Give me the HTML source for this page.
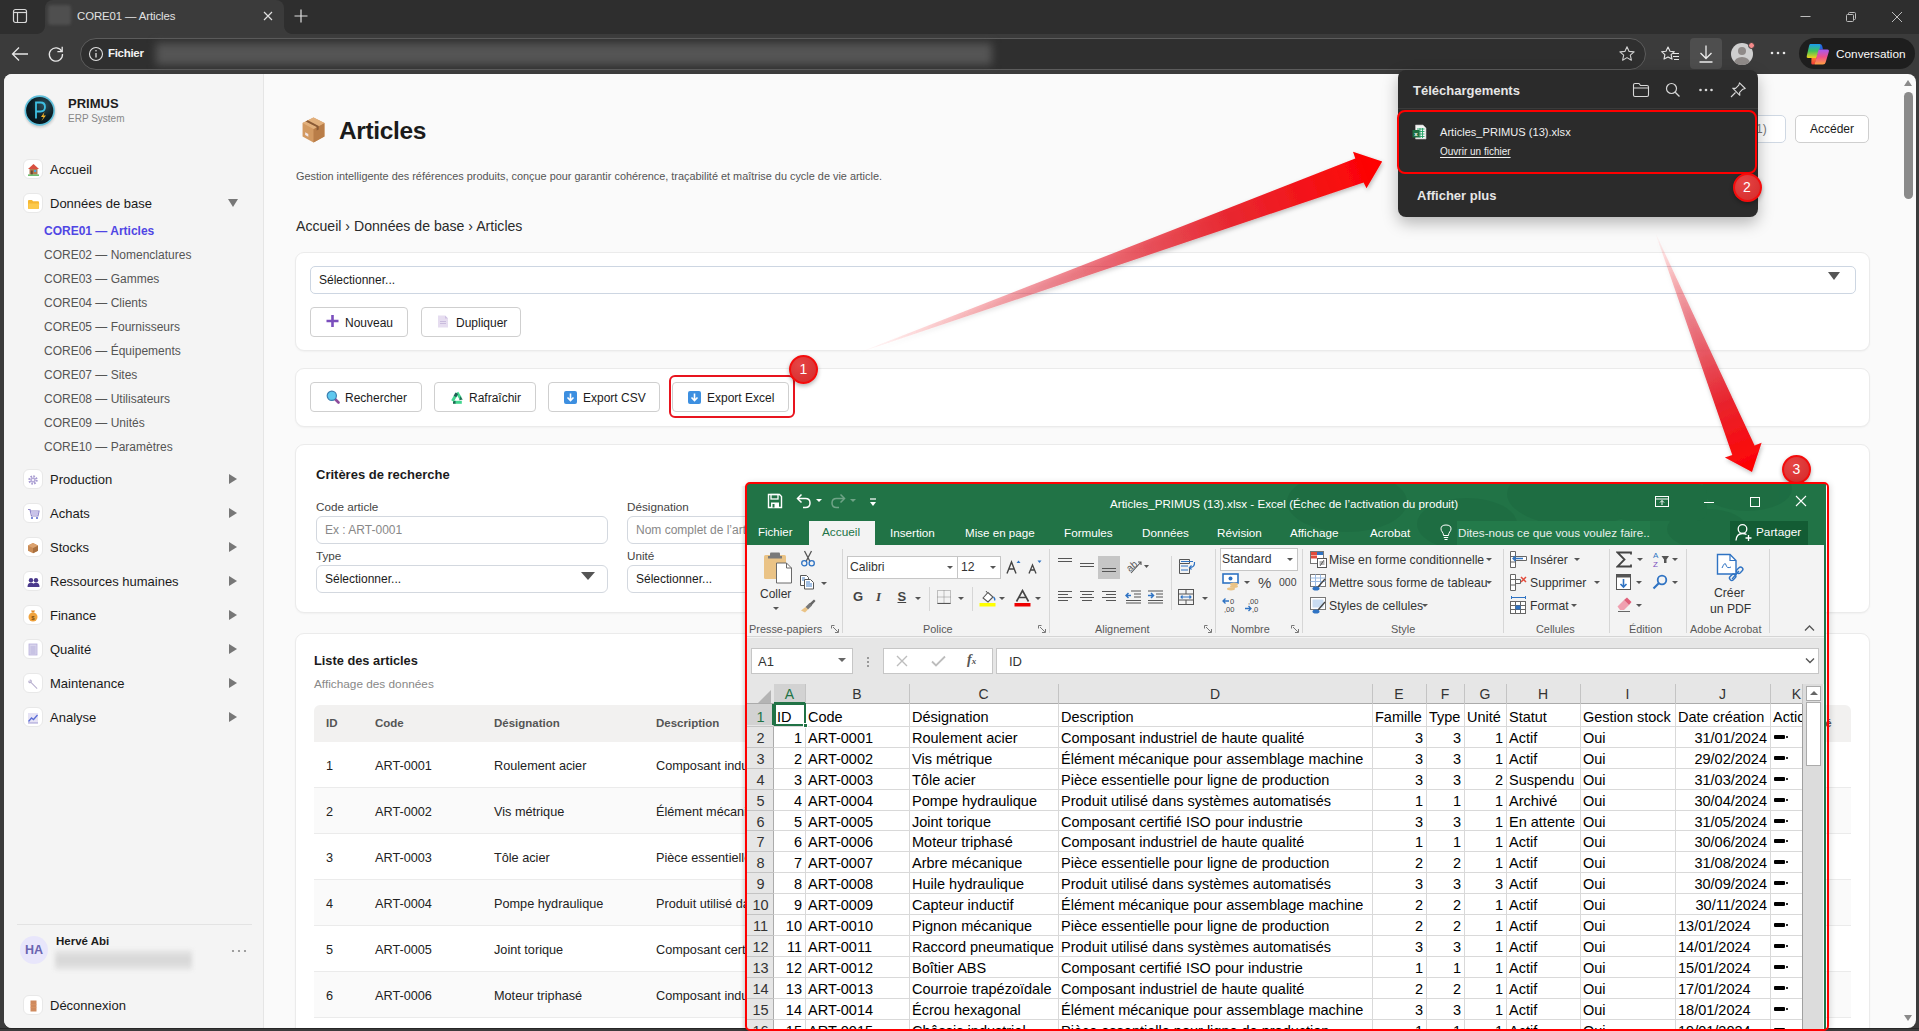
<!DOCTYPE html>
<html><head><meta charset="utf-8">
<style>
*{box-sizing:border-box;margin:0;padding:0}
html,body{width:1919px;height:1031px;overflow:hidden;background:#3b3b3b;font-family:"Liberation Sans",sans-serif}
.a{position:absolute}
.t{position:absolute;white-space:nowrap;line-height:1}
/* chrome */
#tabstrip{left:0;top:0;width:1919px;height:34px;background:#2e2e2e}
#tab{left:45px;top:0;width:239px;height:34px;background:#3b3b3b;border-radius:8px 8px 0 0}
#toolbar{left:0;top:34px;width:1919px;height:40px;background:#3b3b3b}
#page{left:4px;top:74px;width:1912px;height:953px;background:#fafafa;border-radius:8px;overflow:hidden}
#sidebar{left:0;top:0;width:259px;height:953px;background:#f4f4f4;border-right:1px solid #e6e6e6}
.nicon{position:absolute;width:20px;height:20px;background:#fff;border:1px solid #e8e8e8;border-radius:6px;font-size:11px;text-align:center;line-height:19px}
.nav{font-size:13px;color:#1a1a1a}
.sub{font-size:12px;color:#555}
.arr{color:#777;font-size:11px}
</style></head><body>

<div id="tabstrip" class="a"></div><div class="a" style="left:0;top:1028px;width:1919px;height:1px;background:#262626"></div>
<div id="tab" class="a"></div><div class="a" style="left:37px;top:26px;width:8px;height:8px;background:radial-gradient(circle at 0 0,#2e2e2e 7.5px,#3b3b3b 8.3px)"></div><div class="a" style="left:284px;top:26px;width:8px;height:8px;background:radial-gradient(circle at 100% 0,#2e2e2e 7.5px,#3b3b3b 8.3px)"></div>
<div id="toolbar" class="a"></div>
<!-- tab strip icons -->
<svg class="a" style="left:12px;top:8px" width="16" height="16" viewBox="0 0 16 16"><rect x="1.5" y="1.5" width="13" height="13" rx="2" fill="none" stroke="#d8d8d8" stroke-width="1.2"/><line x1="1.5" y1="4.5" x2="14.5" y2="4.5" stroke="#d8d8d8" stroke-width="1.2"/><line x1="5.5" y1="4.5" x2="5.5" y2="14.5" stroke="#d8d8d8" stroke-width="1.2"/></svg>
<div class="a" style="left:48px;top:5px;width:23px;height:20px;background:#4f4f4f;border-radius:3px;filter:blur(1.5px)"></div>
<div class="t" style="left:77px;top:11px;font-size:11.4px;color:#e2e2e2;letter-spacing:-0.1px">CORE01 — Articles</div>
<svg class="a" style="left:262px;top:10px" width="12" height="12" viewBox="0 0 12 12"><path d="M2 2L10 10M10 2L2 10" stroke="#e0e0e0" stroke-width="1.2"/></svg>
<svg class="a" style="left:293px;top:8px" width="16" height="16" viewBox="0 0 16 16"><path d="M8 1.5V14.5M1.5 8H14.5" stroke="#e0e0e0" stroke-width="1.2"/></svg>
<svg class="a" style="left:1798px;top:11px" width="16" height="12" viewBox="0 0 16 12"><path d="M2.5 5.5H12.5" stroke="#bdbdbd" stroke-width="1"/></svg>
<svg class="a" style="left:1845px;top:11px" width="12" height="12" viewBox="0 0 12 12"><rect x="1.5" y="3.5" width="7" height="7" rx="1" fill="none" stroke="#bdbdbd"/><path d="M3.5 3.5V2.5Q3.5 1.5 4.5 1.5H9.5Q10.5 1.5 10.5 2.5V7.5Q10.5 8.5 9.5 8.5H8.5" fill="none" stroke="#bdbdbd"/></svg>
<svg class="a" style="left:1891px;top:11px" width="12" height="12" viewBox="0 0 12 12"><path d="M1 1L11 11M11 1L1 11" stroke="#bdbdbd" stroke-width="1"/></svg>
<!-- toolbar -->
<svg class="a" style="left:11px;top:46px" width="18" height="16" viewBox="0 0 18 16"><path d="M17 8H1.5M8 1.5L1.5 8L8 14.5" fill="none" stroke="#e6e6e6" stroke-width="1.3"/></svg>
<svg class="a" style="left:47px;top:45px" width="18" height="18" viewBox="0 0 18 18"><path d="M14.8 6.5A6.6 6.6 0 1 0 15.5 9" fill="none" stroke="#e6e6e6" stroke-width="1.3"/><path d="M15.2 1.8V6.6H10.4" fill="none" stroke="#e6e6e6" stroke-width="1.3"/></svg>
<div class="a" style="left:80px;top:38px;width:1566px;height:32px;border:1px solid #5c5c5c;border-radius:16px;background:#2f2f2f"></div>
<div class="a" style="left:156px;top:43px;width:836px;height:22px;background:#555;filter:blur(4px)"></div>
<svg class="a" style="left:88px;top:46px" width="16" height="16" viewBox="0 0 16 16"><circle cx="8" cy="8" r="6.5" fill="none" stroke="#e0e0e0" stroke-width="1.1"/><path d="M8 7V11.5" stroke="#e0e0e0" stroke-width="1.3"/><circle cx="8" cy="4.8" r=".8" fill="#e0e0e0"/></svg>
<div class="t" style="left:108px;top:48px;font-size:11.5px;font-weight:bold;color:#f2f2f2;letter-spacing:-0.3px">Fichier</div>
<svg class="a" style="left:1618px;top:45px" width="18" height="18" viewBox="0 0 18 18"><path d="M9 1.8L11.1 6.4L16.1 6.9L12.3 10.2L13.4 15.2L9 12.6L4.6 15.2L5.7 10.2L1.9 6.9L6.9 6.4Z" fill="none" stroke="#cfcfcf" stroke-width="1.1" stroke-linejoin="round"/></svg>
<svg class="a" style="left:1660px;top:45px" width="20" height="18" viewBox="0 0 20 18"><path d="M8 2L10 6.2L14.4 6.7L11.1 9.7L12 14.1L8 11.9L4 14.1L4.9 9.7L1.6 6.7L6 6.2Z" fill="none" stroke="#e6e6e6" stroke-width="1.1" stroke-linejoin="round"/><path d="M13 8.5H19M13 11.5H19M14 14.5H19" stroke="#e6e6e6" stroke-width="1.1"/></svg>
<div class="a" style="left:1690px;top:38px;width:32px;height:31px;background:#4e4e4e;border-radius:4px"></div>
<svg class="a" style="left:1697px;top:44px" width="18" height="20" viewBox="0 0 18 20"><path d="M9 1.5V14.5M3.5 9L9 14.5L14.5 9M2.5 18H15.5" fill="none" stroke="#ededed" stroke-width="1.3"/></svg>
<div class="a" style="left:1731px;top:43px;width:22px;height:22px;border-radius:50%;background:#cfcfcf;overflow:hidden"><div class="a" style="left:7px;top:4px;width:8px;height:8px;border-radius:50%;background:#8f8a88"></div><div class="a" style="left:3px;top:14px;width:16px;height:12px;border-radius:50%;background:#8f8a88"></div></div>
<div class="a" style="left:1748px;top:42px;width:7px;height:7px;border-radius:50%;background:#f48a8a;border:1px solid #3b3b3b"></div>
<svg class="a" style="left:1770px;top:50px" width="16" height="6" viewBox="0 0 16 6"><circle cx="2" cy="3" r="1.3" fill="#e6e6e6"/><circle cx="8" cy="3" r="1.3" fill="#e6e6e6"/><circle cx="14" cy="3" r="1.3" fill="#e6e6e6"/></svg>
<div class="a" style="left:1799px;top:38px;width:116px;height:31px;background:#1e1e1e;border-radius:16px"></div>
<svg class="a" style="left:1806px;top:43px" width="24" height="22" viewBox="0 0 24 22"><defs><linearGradient id="cpa" x1="0" y1="0" x2="0" y2="1"><stop offset="0" stop-color="#1a9cf0"/><stop offset=".5" stop-color="#3fc25a"/><stop offset="1" stop-color="#f2d21a"/></linearGradient><linearGradient id="cpb" x1="0" y1="0" x2="0" y2="1"><stop offset="0" stop-color="#a55af5"/><stop offset=".5" stop-color="#f0508a"/><stop offset="1" stop-color="#ffa040"/></linearGradient><linearGradient id="cpc" x1="0" y1="0" x2="0" y2="1"><stop offset="0" stop-color="#ff7a30"/><stop offset="1" stop-color="#f03a3a"/></linearGradient></defs><path d="M11.5 1H13.8Q15.6 1 16.2 3L17 6.5H12.5Z" fill="#2565e0"/><path d="M5.5 15H10.5L9.3 20Q8.9 21.5 7.5 21.5H6.8Q5.2 21.5 5.3 20Z" fill="url(#cpc)"/><path d="M4.3 1H13Q15 1 14.4 3L10.6 15H1.9Q0.3 15 0.7 13.2L3.1 2.8Q3.5 1 4.3 1Z" fill="url(#cpa)"/><path d="M13 6.5H21.5Q23.4 6.5 22.9 8.5L19.6 19.5Q19.1 21.5 17 21.5H8.5L12.2 8Q12.5 6.5 13 6.5Z" fill="url(#cpb)"/></svg>
<div class="t" style="left:1836px;top:48.7px;font-size:11.8px;color:#fafafa">Conversation</div>
<div id="pg" class="a" style="left:4px;top:74px;width:1912px;height:954px;border-radius:8px;overflow:hidden;background:#fafafa"><div class="a" style="left:-4px;top:-74px;width:1919px;height:1031px">
<div class="a" style="left:4px;top:74px;width:260px;height:954px;background:#f4f4f4;border-right:1px solid #e5e5e5"></div>
<svg class="a" style="left:22px;top:92px" width="36" height="38" viewBox="0 0 36 38"><defs><radialGradient id="lg" cx=".65" cy=".3" r=".8"><stop offset="0" stop-color="#2d4f5a"/><stop offset=".55" stop-color="#0b1e25"/><stop offset="1" stop-color="#06141a"/></radialGradient></defs><circle cx="18" cy="20" r="15.5" fill="#000" opacity=".15" filter="blur(1px)"/><circle cx="17.7" cy="18.5" r="15.2" fill="#5fc0dc"/><circle cx="17.7" cy="18.5" r="13.6" fill="url(#lg)"/><path d="M14 26.5V10.5H18.5Q23 10.5 23 15Q23 19.5 18.5 19.5H14" fill="none" stroke="#3ec0e3" stroke-width="1.8"/><path d="M22.5 20L19 25H21.5L19.5 29L24 23.5H21.5Z" fill="#f2b32a"/></svg>
<div class="t" style="left:68px;top:97px;font-size:13px;font-weight:bold;color:#1d1d1d">PRIMUS</div>
<div class="t" style="left:68px;top:114px;font-size:10px;color:#888">ERP System</div>
<div class="nicon" style="left:23px;top:159px"><svg width="13" height="13" viewBox="0 0 13 13" style="margin-top:3px"><path d="M6.5 1L12 6H1Z" fill="#d9503f"/><rect x="2.5" y="6" width="8" height="5.5" fill="#b07a52"/><rect x="7" y="7" width="2.2" height="2" fill="#4aa8e0"/><rect x="3.8" y="7.5" width="2" height="4" fill="#6d4a33"/><rect x="1" y="11.5" width="11" height="1.3" fill="#4caf50"/></svg></div><div class="t nav" style="left:50px;top:163px">Accueil</div><div class="nicon" style="left:23px;top:193px"><svg width="13" height="12" viewBox="0 0 13 12" style="margin-top:4px"><path d="M1 3Q1 2 2 2H5L6 3.2H11Q12 3.2 12 4.2V10Q12 11 11 11H2Q1 11 1 10Z" fill="#f5b731"/><path d="M1.5 5.5H12.3L11.6 10.2Q11.5 11 10.7 11H2.2Q1.4 11 1.3 10.2Z" fill="#fcc94a"/></svg></div><div class="t nav" style="left:50px;top:197px">Données de base</div><div class="a" style="left:228px;top:199px;width:0;height:0;border-left:5px solid transparent;border-right:5px solid transparent;border-top:8px solid #777"></div><div class="t" style="left:44px;top:225px;font-size:12px;font-weight:bold;color:#5046e4">CORE01 — Articles</div><div class="t sub" style="left:44px;top:249px">CORE02 — Nomenclatures</div><div class="t sub" style="left:44px;top:273px">CORE03 — Gammes</div><div class="t sub" style="left:44px;top:297px">CORE04 — Clients</div><div class="t sub" style="left:44px;top:321px">CORE05 — Fournisseurs</div><div class="t sub" style="left:44px;top:345px">CORE06 — Équipements</div><div class="t sub" style="left:44px;top:369px">CORE07 — Sites</div><div class="t sub" style="left:44px;top:393px">CORE08 — Utilisateurs</div><div class="t sub" style="left:44px;top:417px">CORE09 — Unités</div><div class="t sub" style="left:44px;top:441px">CORE10 — Paramètres</div><div class="nicon" style="left:23px;top:469px"><svg width="12" height="12" viewBox="0 0 12 12" style="margin-top:4px"><circle cx="6" cy="6" r="3.6" fill="none" stroke="#a79bd0" stroke-width="2.2" stroke-dasharray="1.6 1.2"/><circle cx="6" cy="6" r="2.6" fill="#b6abd9"/><circle cx="6" cy="6" r="1.1" fill="#fff"/></svg></div><div class="t nav" style="left:50px;top:473px">Production</div><div class="a" style="left:229px;top:474px;width:0;height:0;border-top:5px solid transparent;border-bottom:5px solid transparent;border-left:8px solid #777"></div><div class="nicon" style="left:23px;top:503px"><svg width="13" height="12" viewBox="0 0 13 12" style="margin-top:4px"><path d="M1 1.5H3L4.5 8H11L12 3H3.6" fill="none" stroke="#8f86c8" stroke-width="1.2"/><path d="M4 3.5H11.5L10.8 7H4.6Z" fill="#c9c3ea"/><circle cx="5" cy="10" r="1" fill="#5566cc"/><circle cx="10" cy="10" r="1" fill="#5566cc"/></svg></div><div class="t nav" style="left:50px;top:507px">Achats</div><div class="a" style="left:229px;top:508px;width:0;height:0;border-top:5px solid transparent;border-bottom:5px solid transparent;border-left:8px solid #777"></div><div class="nicon" style="left:23px;top:537px"><svg width="12" height="12" viewBox="0 0 12 12" style="margin-top:4px"><path d="M6 1L11 3.5V8.8L6 11.2L1 8.8V3.5Z" fill="#c98b55"/><path d="M6 6V11.2L11 8.8V3.5Z" fill="#a9703f"/><path d="M1 3.5L6 6L11 3.5L6 1Z" fill="#dca26e"/></svg></div><div class="t nav" style="left:50px;top:541px">Stocks</div><div class="a" style="left:229px;top:542px;width:0;height:0;border-top:5px solid transparent;border-bottom:5px solid transparent;border-left:8px solid #777"></div><div class="nicon" style="left:23px;top:571px"><svg width="13" height="11" viewBox="0 0 13 11" style="margin-top:5px"><circle cx="4" cy="3.2" r="2.2" fill="#4b3a8c"/><circle cx="9" cy="3.2" r="2.2" fill="#4b3a8c"/><path d="M0.5 10Q0.5 5.8 4 5.8Q7.5 5.8 7.5 10Z" fill="#4b3a8c"/><path d="M5.5 10Q5.5 5.8 9 5.8Q12.5 5.8 12.5 10Z" fill="#4b3a8c"/></svg></div><div class="t nav" style="left:50px;top:575px">Ressources humaines</div><div class="a" style="left:229px;top:576px;width:0;height:0;border-top:5px solid transparent;border-bottom:5px solid transparent;border-left:8px solid #777"></div><div class="nicon" style="left:23px;top:605px"><svg width="12" height="13" viewBox="0 0 12 13" style="margin-top:3px"><path d="M4 1.5H8L7 3.5H5Z" fill="#e08a2a"/><circle cx="6" cy="8" r="4.5" fill="#f0a23c"/><text x="6" y="10.5" font-size="6" text-anchor="middle" fill="#7a4a10" font-family="Liberation Sans" font-weight="bold">$</text></svg></div><div class="t nav" style="left:50px;top:609px">Finance</div><div class="a" style="left:229px;top:610px;width:0;height:0;border-top:5px solid transparent;border-bottom:5px solid transparent;border-left:8px solid #777"></div><div class="nicon" style="left:23px;top:639px"><svg width="10" height="13" viewBox="0 0 10 13" style="margin-top:3px"><rect x="1" y="1" width="8" height="11" fill="#d8d4ec" stroke="#b8b0dc" stroke-width=".8"/><path d="M2.5 4H7.5M2.5 6H7.5M2.5 8H7.5M2.5 10H7.5" stroke="#a59bd3" stroke-width=".6"/></svg></div><div class="t nav" style="left:50px;top:643px">Qualité</div><div class="a" style="left:229px;top:644px;width:0;height:0;border-top:5px solid transparent;border-bottom:5px solid transparent;border-left:8px solid #777"></div><div class="nicon" style="left:23px;top:673px"><svg width="12" height="12" viewBox="0 0 12 12" style="margin-top:4px"><path d="M2 2.2Q3.5 1 4.6 2.2Q5.2 3.2 4.6 4.2L10.5 10.2L9.8 10.9L3.8 5Q2.8 5.6 1.8 5Q0.8 4 1.6 2.6L3 3.8L3.8 3Z" fill="#b8b0cf"/></svg></div><div class="t nav" style="left:50px;top:677px">Maintenance</div><div class="a" style="left:229px;top:678px;width:0;height:0;border-top:5px solid transparent;border-bottom:5px solid transparent;border-left:8px solid #777"></div><div class="nicon" style="left:23px;top:707px"><svg width="12" height="12" viewBox="0 0 12 12" style="margin-top:4px"><rect x="1" y="1" width="10" height="10" fill="#e6e3f5"/><path d="M1.5 9.5L4.5 6L6.5 7.5L10.5 3" fill="none" stroke="#5b6ed6" stroke-width="1.3"/><path d="M1 11H11" stroke="#8d86c9" stroke-width=".8"/></svg></div><div class="t nav" style="left:50px;top:711px">Analyse</div><div class="a" style="left:229px;top:712px;width:0;height:0;border-top:5px solid transparent;border-bottom:5px solid transparent;border-left:8px solid #777"></div><div class="a" style="left:17px;top:924px;width:235px;height:1px;background:#e3e3e3"></div>
<div class="a" style="left:20px;top:936px;width:28px;height:28px;border-radius:50%;background:#e8e6fb"></div>
<div class="t" style="left:20px;top:943.5px;width:28px;text-align:center;font-size:12.5px;font-weight:bold;color:#6a64b0">HA</div>
<div class="t" style="left:56px;top:936px;font-size:11.5px;font-weight:bold;color:#1d1d1d">Hervé Abi</div>
<div class="a" style="left:55px;top:950px;width:137px;height:20px;background:linear-gradient(to bottom,#e6e6e6,#d6d6d6 50%,#e6e6e6);filter:blur(2px)"></div>
<svg class="a" style="left:231px;top:949px" width="16" height="4" viewBox="0 0 16 4"><circle cx="2" cy="2" r="1.1" fill="#8a8a8a"/><circle cx="8" cy="2" r="1.1" fill="#8a8a8a"/><circle cx="14" cy="2" r="1.1" fill="#8a8a8a"/></svg>
<div class="nicon" style="left:23px;top:995px"><svg width="9" height="12" viewBox="0 0 9 12" style="margin-top:4px"><rect x="1.5" y="0.5" width="6" height="11" fill="#cf8a5e"/><path d="M1.5 4.5H7.5M1.5 7.5H7.5" stroke="#e09a66" stroke-width=".5"/></svg></div><div class="t nav" style="left:50px;top:999px">Déconnexion</div>
<svg class="a" style="left:301px;top:116px" width="25" height="28" viewBox="0 0 24 26" preserveAspectRatio="none"><path d="M12 1.5L22.5 6.5V19L12 24.5L1.5 19V6.5Z" fill="#d39a62"/><path d="M12 12V24.5L22.5 19V6.5Z" fill="#b97d48"/><path d="M1.5 6.5L12 12L22.5 6.5L12 1.5Z" fill="#e2b07c"/><path d="M6.5 4L17 9.2V12.5L15 13.5V10.2L4.5 5Z" fill="#8a5a35"/><rect x="4" y="16" width="3" height="2.5" fill="#f2e6e6" transform="skewY(28) translate(0,-3)"/></svg>
<div class="t" style="left:339px;top:118.5px;font-size:24.5px;font-weight:bold;color:#1b1b1b;letter-spacing:-0.35px">Articles</div>
<div class="t" style="left:296px;top:170.5px;font-size:10.9px;color:#555">Gestion intelligente des références produits, conçue pour garantir cohérence, traçabilité et maîtrise du cycle de vie article.</div>
<div class="t" style="left:296px;top:219px;font-size:14.1px;color:#2a2a2a">Accueil › Données de base › Articles</div>
<div class="a" style="left:1600px;top:115px;width:186px;height:28px;background:#fff;border:1px solid #cfd8e3;border-radius:5px"></div>
<div class="t" style="left:1756px;top:123px;font-size:12px;color:#777">1)</div>
<div class="a" style="left:1795px;top:115px;width:74px;height:28px;background:#fff;border:1px solid #cfcfcf;border-radius:5px"></div>
<div class="t" style="left:1810px;top:123px;font-size:12px;color:#1b1b1b">Accéder</div>
<div class="a" style="left:295px;top:251.5px;width:1575px;height:99.5px;background:#fff;border:1px solid #ebebeb;border-radius:9px;box-shadow:0 1px 2px rgba(0,0,0,.04)"></div>
<div class="a" style="left:310px;top:266px;width:1546px;height:28px;background:#fff;border:1px solid #cdd6e2;border-radius:5px"></div>
<div class="t" style="left:319px;top:274px;font-size:12px;color:#1b1b1b">Sélectionner...</div>
<div class="a" style="left:1828px;top:272px;width:0;height:0;border-left:6.5px solid transparent;border-right:6.5px solid transparent;border-top:8px solid #555"></div>
<div class="a" style="left:310px;top:307px;width:98px;height:30px;background:#fff;border:1px solid #cfcfcf;border-radius:4px"></div><svg class="a" style="left:326px;top:314px" width="13" height="14" viewBox="0 0 13 14"><path d="M6.5 1V13M0.5 7H12.5" stroke="#7b4fbd" stroke-width="2.6"/></svg><div class="t" style="left:345px;top:317px;font-size:12px;color:#1b1b1b">Nouveau</div>
<div class="a" style="left:421px;top:307px;width:100px;height:30px;background:#fff;border:1px solid #cfcfcf;border-radius:4px"></div><svg class="a" style="left:437px;top:315px" width="12" height="13" viewBox="0 0 12 13"><path d="M1 0.5H8L11 3.5V12.5H1Z" fill="#e6ddf0"/><path d="M8 0.5V3.5H11Z" fill="#cfc2e2"/><path d="M3 6.5H9M3 8.5H9" stroke="#c2b4d8" stroke-width=".8"/></svg><div class="t" style="left:456px;top:317px;font-size:12px;color:#1b1b1b">Dupliquer</div>
<div class="a" style="left:295px;top:367.5px;width:1575px;height:59.5px;background:#fff;border:1px solid #ebebeb;border-radius:9px;box-shadow:0 1px 2px rgba(0,0,0,.04)"></div>
<div class="a" style="left:310px;top:382px;width:112px;height:30px;background:#fff;border:1px solid #cfcfcf;border-radius:4px"></div><svg class="a" style="left:326px;top:390px" width="14" height="14" viewBox="0 0 14 14"><path d="M8.5 8.5L12.5 12.5" stroke="#8e4b9b" stroke-width="2.6" stroke-linecap="round"/><circle cx="5.8" cy="5.8" r="4.6" fill="#5ec8ef" stroke="#3a7fb0" stroke-width="1.2"/></svg><div class="t" style="left:345px;top:392px;font-size:12px;color:#1b1b1b">Rechercher</div>
<div class="a" style="left:434px;top:382px;width:102px;height:30px;background:#fff;border:1px solid #cfcfcf;border-radius:4px"></div><svg class="a" style="left:450px;top:390px" width="15" height="15" viewBox="0 0 15 15"><path d="M7 2.5L10.5 8.2" stroke="#43d68f" stroke-width="3"/><path d="M10.2 6.2L12.8 9.6L9.2 10.2Z" fill="#1d7055"/><path d="M11.8 12.3H5" stroke="#43d68f" stroke-width="3"/><path d="M5.5 12.3H3" stroke="#1d6a52" stroke-width="3"/><path d="M2.5 11L5.5 5.8" stroke="#43d68f" stroke-width="3"/><path d="M5 6.5L6.8 3.2" stroke="#1f5f55" stroke-width="3"/></svg><div class="t" style="left:469px;top:392px;font-size:12px;color:#1b1b1b">Rafraîchir</div>
<div class="a" style="left:548px;top:382px;width:112px;height:30px;background:#fff;border:1px solid #cfcfcf;border-radius:4px"></div><svg class="a" style="left:564px;top:391px" width="13" height="13" viewBox="0 0 13 13"><rect x="0" y="0" width="13" height="13" rx="2" fill="#3d8fe0"/><path d="M6.5 2.5V9M3.5 6.5L6.5 9.5L9.5 6.5" fill="none" stroke="#fff" stroke-width="1.6"/></svg><div class="t" style="left:583px;top:392px;font-size:12px;color:#1b1b1b">Export CSV</div>
<div class="a" style="left:672px;top:382px;width:117px;height:30px;background:#fff;border:1px solid #cfcfcf;border-radius:4px"></div><svg class="a" style="left:688px;top:391px" width="13" height="13" viewBox="0 0 13 13"><rect x="0" y="0" width="13" height="13" rx="2" fill="#3d8fe0"/><path d="M6.5 2.5V9M3.5 6.5L6.5 9.5L9.5 6.5" fill="none" stroke="#fff" stroke-width="1.6"/></svg><div class="t" style="left:707px;top:392px;font-size:12px;color:#1b1b1b">Export Excel</div>
<div class="a" style="left:295px;top:443.5px;width:1575px;height:169.5px;background:#fff;border:1px solid #ebebeb;border-radius:9px;box-shadow:0 1px 2px rgba(0,0,0,.04)"></div>
<div class="t" style="left:316px;top:468px;font-size:13px;font-weight:bold;color:#1b1b1b">Critères de recherche</div>
<div class="t" style="left:316px;top:501px;font-size:11.7px;color:#444">Code article</div>
<div class="a" style="left:316px;top:516px;width:292px;height:28px;background:#fff;border:1px solid #d3d8df;border-radius:6px"></div><div class="t" style="left:325px;top:524px;font-size:12px;color:#888">Ex : ART-0001</div>
<div class="t" style="left:627px;top:501px;font-size:11.7px;color:#444">Désignation</div>
<div class="a" style="left:627px;top:516px;width:292px;height:28px;background:#fff;border:1px solid #d3d8df;border-radius:6px"></div><div class="t" style="left:636px;top:524px;font-size:12px;color:#888">Nom complet de l’article</div>
<div class="t" style="left:316px;top:550px;font-size:11.7px;color:#444">Type</div>
<div class="a" style="left:316px;top:565px;width:292px;height:28px;background:#fff;border:1px solid #d3d8df;border-radius:6px"></div><div class="t" style="left:325px;top:573px;font-size:12px;color:#1b1b1b">Sélectionner...</div><div class="a" style="left:581px;top:572px;width:0;height:0;border-left:7.0px solid transparent;border-right:7.0px solid transparent;border-top:8px solid #555"></div>
<div class="t" style="left:627px;top:550px;font-size:11.7px;color:#444">Unité</div>
<div class="a" style="left:627px;top:565px;width:292px;height:28px;background:#fff;border:1px solid #d3d8df;border-radius:6px"></div><div class="t" style="left:636px;top:573px;font-size:12px;color:#1b1b1b">Sélectionner...</div><div class="a" style="left:892px;top:572px;width:0;height:0;border-left:7.0px solid transparent;border-right:7.0px solid transparent;border-top:8px solid #555"></div>
<div class="a" style="left:295px;top:632.5px;width:1575px;height:420.5px;background:#fff;border:1px solid #ebebeb;border-radius:9px;box-shadow:0 1px 2px rgba(0,0,0,.04)"></div>
<div class="t" style="left:314px;top:655px;font-size:12.8px;font-weight:bold;color:#1b1b1b">Liste des articles</div>
<div class="t" style="left:314px;top:679px;font-size:11.8px;color:#888">Affichage des données</div>
<div class="a" style="left:314px;top:705px;width:1537px;height:37px;background:#f2f1f0;border-radius:6px 6px 0 0"></div>
<div class="t" style="left:326px;top:718px;font-size:11.5px;font-weight:bold;color:#555">ID</div>
<div class="t" style="left:375px;top:718px;font-size:11.5px;font-weight:bold;color:#555">Code</div>
<div class="t" style="left:494px;top:718px;font-size:11.5px;font-weight:bold;color:#555">Désignation</div>
<div class="t" style="left:656px;top:718px;font-size:11.5px;font-weight:bold;color:#555">Description</div>
<div class="t" style="left:1790px;top:718px;font-size:11.5px;font-weight:bold;color:#555">Activité</div>
<div class="a" style="left:314px;top:787px;width:1537px;height:1px;background:#ebebeb"></div>
<div class="t" style="left:326px;top:760px;font-size:12.7px;color:#222">1</div>
<div class="t" style="left:375px;top:760px;font-size:12.7px;color:#222">ART-0001</div>
<div class="t" style="left:494px;top:760px;font-size:12.7px;color:#222">Roulement acier</div>
<div class="t" style="left:656px;top:760px;font-size:12.7px;color:#222">Composant industriel de haute qualité</div>
<div class="a" style="left:314px;top:788px;width:1537px;height:46px;background:#fafafa"></div>
<div class="a" style="left:314px;top:833px;width:1537px;height:1px;background:#ebebeb"></div>
<div class="t" style="left:326px;top:806px;font-size:12.7px;color:#222">2</div>
<div class="t" style="left:375px;top:806px;font-size:12.7px;color:#222">ART-0002</div>
<div class="t" style="left:494px;top:806px;font-size:12.7px;color:#222">Vis métrique</div>
<div class="t" style="left:656px;top:806px;font-size:12.7px;color:#222">Élément mécanique pour assemblage machine</div>
<div class="a" style="left:314px;top:879px;width:1537px;height:1px;background:#ebebeb"></div>
<div class="t" style="left:326px;top:852px;font-size:12.7px;color:#222">3</div>
<div class="t" style="left:375px;top:852px;font-size:12.7px;color:#222">ART-0003</div>
<div class="t" style="left:494px;top:852px;font-size:12.7px;color:#222">Tôle acier</div>
<div class="t" style="left:656px;top:852px;font-size:12.7px;color:#222">Pièce essentielle pour ligne de production</div>
<div class="a" style="left:314px;top:880px;width:1537px;height:46px;background:#fafafa"></div>
<div class="a" style="left:314px;top:925px;width:1537px;height:1px;background:#ebebeb"></div>
<div class="t" style="left:326px;top:898px;font-size:12.7px;color:#222">4</div>
<div class="t" style="left:375px;top:898px;font-size:12.7px;color:#222">ART-0004</div>
<div class="t" style="left:494px;top:898px;font-size:12.7px;color:#222">Pompe hydraulique</div>
<div class="t" style="left:656px;top:898px;font-size:12.7px;color:#222">Produit utilisé dans systèmes automatisés</div>
<div class="a" style="left:314px;top:971px;width:1537px;height:1px;background:#ebebeb"></div>
<div class="t" style="left:326px;top:944px;font-size:12.7px;color:#222">5</div>
<div class="t" style="left:375px;top:944px;font-size:12.7px;color:#222">ART-0005</div>
<div class="t" style="left:494px;top:944px;font-size:12.7px;color:#222">Joint torique</div>
<div class="t" style="left:656px;top:944px;font-size:12.7px;color:#222">Composant certifié ISO pour industrie</div>
<div class="a" style="left:314px;top:972px;width:1537px;height:46px;background:#fafafa"></div>
<div class="a" style="left:314px;top:1017px;width:1537px;height:1px;background:#ebebeb"></div>
<div class="t" style="left:326px;top:990px;font-size:12.7px;color:#222">6</div>
<div class="t" style="left:375px;top:990px;font-size:12.7px;color:#222">ART-0006</div>
<div class="t" style="left:494px;top:990px;font-size:12.7px;color:#222">Moteur triphasé</div>
<div class="t" style="left:656px;top:990px;font-size:12.7px;color:#222">Composant industriel de haute qualité</div>
<div class="a" style="left:1904px;top:80px;width:0;height:0;border-left:4.5px solid transparent;border-right:4.5px solid transparent;border-bottom:6px solid #8a8a8a"></div>
<div class="a" style="left:1904px;top:92px;width:9px;height:107px;background:#8a8a8a;border-radius:5px"></div>
<div class="a" style="left:1904px;top:1015px;width:0;height:0;border-left:4.5px solid transparent;border-right:4.5px solid transparent;border-top:6px solid #8a8a8a"></div>
</div></div>
<div class="a" style="left:1398px;top:70px;width:360px;height:147px;background:#2b2b2b;border-radius:8px;box-shadow:0 6px 16px rgba(0,0,0,.28)"></div>
<div class="t" style="left:1413px;top:84px;font-size:13px;font-weight:bold;color:#e6e6e6">Téléchargements</div>
<svg class="a" style="left:1632px;top:82px" width="18" height="16" viewBox="0 0 18 16"><path d="M1.5 3Q1.5 1.5 3 1.5H7L8.5 3.5H15Q16.5 3.5 16.5 5V13Q16.5 14.5 15 14.5H3Q1.5 14.5 1.5 13Z M1.5 6H16.5" fill="none" stroke="#d8d8d8" stroke-width="1.1"/></svg>
<svg class="a" style="left:1665px;top:82px" width="16" height="16" viewBox="0 0 16 16"><circle cx="6.5" cy="6.5" r="5" fill="none" stroke="#d8d8d8" stroke-width="1.2"/><path d="M10.2 10.2L14.5 14.5" stroke="#d8d8d8" stroke-width="1.3"/></svg>
<svg class="a" style="left:1698px;top:87px" width="16" height="6" viewBox="0 0 16 6"><circle cx="2.5" cy="3" r="1.3" fill="#d8d8d8"/><circle cx="8" cy="3" r="1.3" fill="#d8d8d8"/><circle cx="13.5" cy="3" r="1.3" fill="#d8d8d8"/></svg>
<svg class="a" style="left:1729px;top:81px" width="18" height="18" viewBox="0 0 18 18"><path d="M10.5 1.8L16.2 7.5L13.8 8.2L10.6 11.4L10.8 14.3L3.7 7.2L6.6 7.4L9.8 4.2Z M6.5 11.5L2 16" fill="none" stroke="#d8d8d8" stroke-width="1.1" stroke-linejoin="round"/></svg>
<div class="a" style="left:1398px;top:108px;width:360px;height:1px;background:#3a3a3a"></div>
<div class="a" style="left:1397px;top:110px;width:360px;height:64px;border:2.5px solid #f00;border-radius:8px"></div>
<svg class="a" style="left:1412px;top:124px" width="15" height="16" viewBox="0 0 15 16"><path d="M3.5 1H11L14 4V15H3.5Z" fill="#f4f4f4" stroke="#bdbdbd" stroke-width=".6"/><path d="M5 5H12.5M5 7.5H12.5M5 10H12.5M5 12.5H12.5M8 4V14M10.5 4V14" stroke="#21a366" stroke-width=".9"/><rect x="0.5" y="6" width="7" height="7.5" fill="#1d6f42"/><text x="4" y="12.3" font-size="6" text-anchor="middle" fill="#fff" font-family="Liberation Sans" font-weight="bold">x</text></svg>
<div class="t" style="left:1440px;top:126.5px;font-size:11.1px;color:#f0f0f0">Articles_PRIMUS (13).xlsx</div>
<div class="t" style="left:1440px;top:147px;font-size:10px;color:#f0f0f0;text-decoration:underline;text-underline-offset:2px">Ouvrir un fichier</div>
<div class="t" style="left:1417px;top:188.5px;font-size:13px;font-weight:bold;color:#e6e6e6">Afficher plus</div>
<div class="a" style="left:669px;top:375px;width:126px;height:43px;border:2.6px solid #e8141e;border-radius:6px"></div>
<div class="a" style="left:789.0px;top:355.0px;width:29px;height:29px;border-radius:50%;background:radial-gradient(circle at 35% 30%,#e64545,#d42a2a);border:2px solid #f40c0c;box-shadow:0 2px 4px rgba(0,0,0,.3)"></div><div class="t" style="left:793.5px;top:362.0px;width:20px;text-align:center;font-size:14px;color:#fff">1</div>
<svg class="a" style="left:0;top:0;overflow:visible" width="1919" height="1031" viewBox="0 0 1919 1031"><defs><linearGradient id="ag1" gradientUnits="userSpaceOnUse" x1="858" y1="353" x2="1382" y2="161"><stop offset="0" stop-color="#ff3030" stop-opacity="0"/><stop offset=".35" stop-color="#e84050" stop-opacity=".55"/><stop offset=".7" stop-color="#e8202a" stop-opacity=".95"/><stop offset="1" stop-color="#ff0000"/></linearGradient><linearGradient id="ag2" gradientUnits="userSpaceOnUse" x1="1655" y1="232" x2="1752" y2="472"><stop offset="0" stop-color="#ff3030" stop-opacity="0"/><stop offset=".35" stop-color="#e84050" stop-opacity=".6"/><stop offset=".7" stop-color="#e8202a" stop-opacity=".97"/><stop offset="1" stop-color="#ff0000"/></linearGradient><filter id="sh" x="-20%" y="-20%" width="140%" height="140%"><feDropShadow dx="1" dy="2" stdDeviation="2" flood-color="#000" flood-opacity=".25"/></filter></defs><path d="M858 353L1355.3 158.6L1353 151.8L1382.2 161.5L1366.5 188.2L1363.6 182.4Z" fill="url(#ag1)" filter="url(#sh)"/><path d="M1655 232L1732.3 455L1724.9 457.6L1752 472L1761.6 442.8L1754.6 445.4Z" fill="url(#ag2)" filter="url(#sh)"/></svg>
<div class="a" style="left:1732.5px;top:173.0px;width:29px;height:29px;border-radius:50%;background:radial-gradient(circle at 35% 30%,#e64545,#d42a2a);border:2px solid #f40c0c;box-shadow:0 2px 4px rgba(0,0,0,.3)"></div><div class="t" style="left:1737px;top:180.0px;width:20px;text-align:center;font-size:14px;color:#fff">2</div>
<div class="a" style="left:1782.0px;top:454.5px;width:29px;height:29px;border-radius:50%;background:radial-gradient(circle at 35% 30%,#e64545,#d42a2a);border:2px solid #f40c0c;box-shadow:0 2px 4px rgba(0,0,0,.3)"></div><div class="t" style="left:1786.5px;top:461.5px;width:20px;text-align:center;font-size:14px;color:#fff">3</div>
<div class="a" style="left:741px;top:486px;width:6px;height:545px;background:linear-gradient(to right,rgba(0,0,0,0),rgba(0,0,0,.12))"></div>
<div class="a" style="left:0;top:0;width:1919px;height:1031px;clip-path:inset(484px 93px 2px 747px)"><div class="a" style="left:747px;top:484px;width:1079px;height:547px;background:#f3f3f3"></div>
<div class="a" style="left:747px;top:484px;width:1079px;height:61px;background:#217346"></div>
<svg class="a" style="left:747px;top:484px" width="1079" height="61" viewBox="0 0 1079 61"><g fill="#1d6b41" opacity=".7"><ellipse cx="600" cy="18" rx="60" ry="30"/><ellipse cx="720" cy="40" rx="50" ry="26"/><ellipse cx="830" cy="10" rx="70" ry="32"/><ellipse cx="960" cy="45" rx="40" ry="20"/><ellipse cx="1000" cy="5" rx="45" ry="22"/><rect x="870" y="0" width="90" height="37" rx="10"/></g></svg>
<svg class="a" style="left:767px;top:493px" width="16" height="16" viewBox="0 0 16 16"><path d="M1.5 1.5H12.5L14.5 3.5V14.5H1.5Z" fill="none" stroke="#fff" stroke-width="1.4"/><rect x="4" y="1.5" width="7" height="4.5" fill="none" stroke="#fff" stroke-width="1.3"/><rect x="4" y="9.5" width="8" height="5" fill="#fff"/><rect x="5.5" y="11" width="2" height="3.5" fill="#217346"/></svg>
<svg class="a" style="left:796px;top:493px" width="30" height="16" viewBox="0 0 30 16"><path d="M2 5.5H9.5Q14 5.5 14 10Q14 14.5 9.5 14.5H7" fill="none" stroke="#fff" stroke-width="1.5"/><path d="M5.5 1.5L1.5 5.5L5.5 9.5" fill="none" stroke="#fff" stroke-width="1.5"/><path d="M20 6H26L23 9Z" fill="#fff"/></svg>
<svg class="a" style="left:831px;top:493px" width="30" height="16" viewBox="0 0 30 16" opacity=".35"><path d="M13 5.5H5.5Q1 5.5 1 10Q1 14.5 5.5 14.5H8" fill="none" stroke="#fff" stroke-width="1.5"/><path d="M9.5 1.5L13.5 5.5L9.5 9.5" fill="none" stroke="#fff" stroke-width="1.5"/><path d="M19 6H25L22 9Z" fill="#fff"/></svg>
<svg class="a" style="left:869px;top:498px" width="8" height="9" viewBox="0 0 8 9"><path d="M1 1H7" stroke="#fff" stroke-width="1.2"/><path d="M1 4H7L4 8Z" fill="#fff"/></svg>
<div class="t" style="left:1110px;top:498px;font-size:11.65px;color:#fff">Articles_PRIMUS (13).xlsx - Excel (Échec de l’activation du produit)</div>
<svg class="a" style="left:1655px;top:496px" width="14" height="11" viewBox="0 0 14 11"><rect x=".5" y=".5" width="13" height="10" fill="none" stroke="#fff"/><path d="M.5 3H13.5" stroke="#fff"/><path d="M7 9V4.5M5 6.5L7 4.5L9 6.5" fill="none" stroke="#fff"/></svg>
<div class="a" style="left:1704px;top:502px;width:10px;height:1px;background:#fff"></div>
<div class="a" style="left:1750px;top:497px;width:10px;height:10px;border:1px solid #fff"></div>
<svg class="a" style="left:1795px;top:495px" width="12" height="12" viewBox="0 0 12 12"><path d="M1 1L11 11M11 1L1 11" stroke="#fff" stroke-width="1.1"/></svg>
<div class="a" style="left:809px;top:521px;width:66px;height:24px;background:#f3f3f3"></div>
<div class="t" style="left:758px;top:526.8px;font-size:11.5px;color:#fff">Fichier</div>
<div class="t" style="left:822px;top:526.8px;font-size:11.8px;color:#217346">Accueil</div>
<div class="t" style="left:890px;top:526.8px;font-size:11.7px;color:#fff">Insertion</div>
<div class="t" style="left:965px;top:526.8px;font-size:11.6px;color:#fff">Mise en page</div>
<div class="t" style="left:1064px;top:526.8px;font-size:11.7px;color:#fff">Formules</div>
<div class="t" style="left:1142px;top:526.8px;font-size:11.7px;color:#fff">Données</div>
<div class="t" style="left:1217px;top:526.8px;font-size:11.7px;color:#fff">Révision</div>
<div class="t" style="left:1290px;top:526.8px;font-size:11.7px;color:#fff">Affichage</div>
<div class="t" style="left:1370px;top:526.8px;font-size:11.7px;color:#fff">Acrobat</div>
<div class="a" style="left:1457px;top:521px;width:193px;height:24px;background:#237a4a"></div>
<svg class="a" style="left:1440px;top:524px" width="12" height="17" viewBox="0 0 12 17"><path d="M3.5 11.5Q3.5 9.5 2.3 8Q1 6.5 1 4.8Q1 1 6 1Q11 1 11 4.8Q11 6.5 9.7 8Q8.5 9.5 8.5 11.5Z M3.8 13.5H8.2M4.5 15.5H7.5" fill="none" stroke="#fff" stroke-width="1"/></svg>
<div class="t" style="left:1458px;top:526.8px;font-size:11.7px;color:#e8f0ea">Dites-nous ce que vous voulez faire..</div>
<div class="a" style="left:1730px;top:521px;width:78px;height:24px;background:#135c34"></div>
<svg class="a" style="left:1735px;top:523px" width="18" height="19" viewBox="0 0 18 19"><circle cx="7.5" cy="6" r="4.3" fill="none" stroke="#fff" stroke-width="1.3"/><path d="M1 17.5Q1.5 10.5 7.5 10.5Q10 10.5 11.5 11.5" fill="none" stroke="#fff" stroke-width="1.3"/><path d="M13.5 12V18M10.5 15H16.5" stroke="#fff" stroke-width="1.3"/></svg>
<div class="t" style="left:1756px;top:526.8px;font-size:11.8px;color:#fff">Partager</div>
<div class="a" style="left:747px;top:545px;width:1079px;height:92px;background:#f3f3f3;border-bottom:1px solid #d5d5d5"></div>
<svg class="a" style="left:763px;top:551px" width="30" height="33" viewBox="0 0 30 33"><rect x="1" y="4" width="22" height="24" rx="1.5" fill="#eac386"/><rect x="7" y="1.5" width="10" height="5" rx="1" fill="#7a7a7a"/><rect x="5" y="5" width="14" height="2.5" fill="#7a7a7a"/><path d="M13.5 12H23.5L28.5 17V32H13.5Z" fill="#fff" stroke="#6a6a6a" stroke-width="1"/><path d="M23.5 12V17H28.5" fill="none" stroke="#6a6a6a" stroke-width="1"/></svg>
<div class="t" style="left:760px;top:588px;font-size:12px;color:#333">Coller</div>
<div class="a" style="left:773px;top:607px;width:0;height:0;border-left:3px solid transparent;border-right:3px solid transparent;border-top:3px solid #555"></div>
<svg class="a" style="left:800px;top:550px" width="16" height="17" viewBox="0 0 16 17"><path d="M4.5 1L10 11.5M11.5 1L6 11.5" stroke="#555" stroke-width="1.3"/><circle cx="4.3" cy="13.3" r="2.6" fill="none" stroke="#2f73c3" stroke-width="1.3"/><circle cx="11.7" cy="13.3" r="2.6" fill="none" stroke="#2f73c3" stroke-width="1.3"/></svg>
<svg class="a" style="left:799px;top:574px" width="16" height="16" viewBox="0 0 16 16"><path d="M1.5 1.5H7.5L9.5 3.5V11.5H1.5Z" fill="#fff" stroke="#555"/><path d="M5.5 5.5H11.5L14.5 8.5V15H5.5Z" fill="#fff" stroke="#555"/><path d="M3 4H6M3 6H5M7 8H11M7 10H13M7 12H13" stroke="#2f73c3" stroke-width=".9"/></svg>
<div class="a" style="left:821px;top:582px;width:0;height:0;border-left:3px solid transparent;border-right:3px solid transparent;border-top:3px solid #555"></div>
<svg class="a" style="left:800px;top:597px" width="16" height="16" viewBox="0 0 16 16"><path d="M9 7L14 2.5L15.5 4L11 9" fill="#666"/><path d="M9.5 6L12 8.5L8 12.5L5.5 10Z" fill="#777"/><path d="M5.5 10L8 12.5L5 15.5L1 13.5Z" fill="#eac386"/></svg>
<div class="a" style="left:842px;top:549px;width:1px;height:84px;background:#d6d6d6"></div>
<div class="t" style="left:749px;top:623.5px;font-size:10.9px;color:#595959">Presse-papiers</div>
<svg class="a" style="left:831px;top:625px" width="8" height="8" viewBox="0 0 8 8"><path d="M.5 .5H3.5M.5 .5V3.5M7.5 7.5H4M7.5 7.5V4M2 2L6.8 6.8" fill="none" stroke="#777" stroke-width="1"/></svg>
<div class="a" style="left:847px;top:556px;width:111px;height:23px;background:#fff;border:1px solid #c6c6c6"></div>
<div class="t" style="left:850px;top:561px;font-size:12.2px;color:#333">Calibri</div>
<div class="a" style="left:947px;top:566px;width:0;height:0;border-left:3px solid transparent;border-right:3px solid transparent;border-top:3px solid #555"></div>
<div class="a" style="left:957px;top:556px;width:44px;height:23px;background:#fff;border:1px solid #c6c6c6"></div>
<div class="t" style="left:961px;top:561px;font-size:12.2px;color:#333">12</div>
<div class="a" style="left:990px;top:566px;width:0;height:0;border-left:3px solid transparent;border-right:3px solid transparent;border-top:3px solid #555"></div>
<svg class="a" style="left:1006px;top:559px" width="16" height="16" viewBox="0 0 16 16"><path d="M1 14.5L5.5 3L10 14.5M2.8 10H8.2" fill="none" stroke="#444" stroke-width="1.4"/><path d="M10.5 4L12.5 1.5L14.5 4Z" fill="#2f73c3"/></svg>
<svg class="a" style="left:1027px;top:559px" width="16" height="16" viewBox="0 0 16 16"><path d="M2 14.5L5.5 6L9 14.5M3.3 11H7.7" fill="none" stroke="#444" stroke-width="1.3"/><path d="M10.5 1.5L14.5 1.5L12.5 4Z" fill="#2f73c3"/></svg>
<div class="t" style="left:853px;top:590px;font-size:13px;font-weight:bold;color:#444">G</div>
<div class="t" style="left:876px;top:590px;font-size:13px;font-style:italic;font-family:'Liberation Serif';font-weight:bold;color:#444">I</div>
<div class="t" style="left:897.5px;top:590px;font-size:13px;font-weight:bold;color:#444;text-decoration:underline">S</div>
<div class="a" style="left:915px;top:597px;width:0;height:0;border-left:3px solid transparent;border-right:3px solid transparent;border-top:3px solid #555"></div>
<div class="a" style="left:929px;top:587px;width:1px;height:24px;background:#d6d6d6"></div>
<svg class="a" style="left:937px;top:590px" width="14" height="14" viewBox="0 0 14 14"><path d="M.5 .5H13.5V13.5H.5Z M7 .5V13.5M.5 7H13.5" fill="none" stroke="#888" stroke-width="1" stroke-dasharray="1 1"/><path d="M.5 13.5H13.5" stroke="#555" stroke-width="1.2"/></svg>
<div class="a" style="left:958px;top:597px;width:0;height:0;border-left:3px solid transparent;border-right:3px solid transparent;border-top:3px solid #555"></div>
<div class="a" style="left:972px;top:587px;width:1px;height:24px;background:#d6d6d6"></div>
<svg class="a" style="left:979px;top:589px" width="18" height="18" viewBox="0 0 18 18"><path d="M4 9L9 3.5L14 8L9 13Z" fill="#fff" stroke="#555" stroke-width="1.1"/><path d="M7 2L8.5 4" stroke="#555"/><path d="M14.5 8Q16.5 10 15.5 11.5" stroke="#2f73c3" stroke-width="1.3" fill="none"/><rect x="0.5" y="14" width="16" height="3.5" fill="#ffff00"/></svg>
<div class="a" style="left:999px;top:597px;width:0;height:0;border-left:3px solid transparent;border-right:3px solid transparent;border-top:3px solid #555"></div>
<svg class="a" style="left:1014px;top:589px" width="17" height="18" viewBox="0 0 17 18"><path d="M2.5 12.5L8.5 1.5L14.5 12.5M4.8 8.5H12.2" fill="none" stroke="#444" stroke-width="1.6"/><rect x="0.5" y="14" width="16" height="3.5" fill="#e00"/></svg>
<div class="a" style="left:1035px;top:597px;width:0;height:0;border-left:3px solid transparent;border-right:3px solid transparent;border-top:3px solid #555"></div>
<div class="t" style="left:923px;top:623.5px;font-size:10.9px;color:#595959">Police</div>
<svg class="a" style="left:1038px;top:625px" width="8" height="8" viewBox="0 0 8 8"><path d="M.5 .5H3.5M.5 .5V3.5M7.5 7.5H4M7.5 7.5V4M2 2L6.8 6.8" fill="none" stroke="#777" stroke-width="1"/></svg>
<div class="a" style="left:1049px;top:549px;width:1px;height:84px;background:#d6d6d6"></div>
<div class="a" style="left:1058px;top:558px;width:14px;height:1.3px;background:#555"></div><div class="a" style="left:1058px;top:561px;width:14px;height:1.3px;background:#555"></div>
<div class="a" style="left:1080px;top:563px;width:14px;height:1.3px;background:#555"></div><div class="a" style="left:1080px;top:566px;width:14px;height:1.3px;background:#555"></div>
<div class="a" style="left:1098px;top:556px;width:22px;height:23px;background:#c6c6c6"></div>
<div class="a" style="left:1102px;top:568px;width:14px;height:1.3px;background:#555"></div><div class="a" style="left:1102px;top:571px;width:14px;height:1.3px;background:#555"></div>
<svg class="a" style="left:1125px;top:558px" width="24" height="16" viewBox="0 0 24 16"><text x="1" y="12" font-size="10" font-family="Liberation Sans" fill="#555" transform="rotate(-40 6 8)">ab</text><path d="M6 15L16 4M13 4H16V7" fill="none" stroke="#555" stroke-width="1.1"/><path d="M19 7H24L21.5 10Z" fill="#555"/></svg>
<div class="a" style="left:1058px;top:591px;width:14px;height:1.3px;background:#555"></div><div class="a" style="left:1058px;top:594px;width:10px;height:1.3px;background:#555"></div><div class="a" style="left:1058px;top:597px;width:14px;height:1.3px;background:#555"></div><div class="a" style="left:1058px;top:600px;width:10px;height:1.3px;background:#555"></div>
<div class="a" style="left:1080px;top:591px;width:14px;height:1.3px;background:#555"></div><div class="a" style="left:1082px;top:594px;width:10px;height:1.3px;background:#555"></div><div class="a" style="left:1080px;top:597px;width:14px;height:1.3px;background:#555"></div><div class="a" style="left:1082px;top:600px;width:10px;height:1.3px;background:#555"></div>
<div class="a" style="left:1102px;top:591px;width:14px;height:1.3px;background:#555"></div><div class="a" style="left:1106px;top:594px;width:10px;height:1.3px;background:#555"></div><div class="a" style="left:1102px;top:597px;width:14px;height:1.3px;background:#555"></div><div class="a" style="left:1106px;top:600px;width:10px;height:1.3px;background:#555"></div>
<svg class="a" style="left:1125px;top:589px" width="17" height="15" viewBox="0 0 17 15"><path d="M6 2H16M9 5H16M9 8H16M1 11.5H16M1 14H16" stroke="#555" stroke-width="1.1"/><path d="M1 6.5H6M3.5 4L1 6.5L3.5 9" fill="none" stroke="#2f73c3" stroke-width="1.5"/></svg>
<svg class="a" style="left:1147px;top:589px" width="17" height="15" viewBox="0 0 17 15"><path d="M1 2H16M9 5H16M9 8H16M1 11.5H16M1 14H16" stroke="#555" stroke-width="1.1"/><path d="M1 6.5H6.5M4 4L6.5 6.5L4 9" fill="none" stroke="#2f73c3" stroke-width="1.5"/></svg>
<div class="a" style="left:1171px;top:556px;width:1px;height:54px;background:#d6d6d6"></div>
<svg class="a" style="left:1178px;top:558px" width="18" height="17" viewBox="0 0 18 17"><path d="M1.5 1.5H11.5V5.5H1.5Z M1.5 5.5V15.5H11.5V10" fill="none" stroke="#555"/><path d="M3 3.5H15M3 8H10M3 12H10" stroke="#2f73c3" stroke-width="1"/><path d="M16.5 4Q17 9.5 11.5 9.5M13.5 7.5L11.5 9.5L13.5 11.5" fill="none" stroke="#2f73c3" stroke-width="1.2"/></svg>
<svg class="a" style="left:1178px;top:589px" width="17" height="16" viewBox="0 0 17 16"><rect x=".5" y=".5" width="15" height="15" fill="none" stroke="#555"/><path d="M.5 5H15.5M.5 11H15.5M8 .5V5M8 11V15.5" stroke="#555"/><path d="M3 8H13M4.5 6.5L3 8L4.5 9.5M11.5 6.5L13 8L11.5 9.5" fill="none" stroke="#2f73c3" stroke-width="1.1"/></svg>
<div class="a" style="left:1202px;top:597px;width:0;height:0;border-left:3px solid transparent;border-right:3px solid transparent;border-top:3px solid #555"></div>
<div class="t" style="left:1095px;top:623.5px;font-size:10.9px;color:#595959">Alignement</div>
<svg class="a" style="left:1204px;top:625px" width="8" height="8" viewBox="0 0 8 8"><path d="M.5 .5H3.5M.5 .5V3.5M7.5 7.5H4M7.5 7.5V4M2 2L6.8 6.8" fill="none" stroke="#777" stroke-width="1"/></svg>
<div class="a" style="left:1215px;top:549px;width:1px;height:84px;background:#d6d6d6"></div>
<div class="a" style="left:1220px;top:548px;width:78px;height:23px;background:#fff;border:1px solid #c6c6c6"></div>
<div class="t" style="left:1222px;top:553px;font-size:12.2px;color:#333">Standard</div>
<div class="a" style="left:1287px;top:558px;width:0;height:0;border-left:3px solid transparent;border-right:3px solid transparent;border-top:3px solid #555"></div>
<svg class="a" style="left:1222px;top:573px" width="18" height="18" viewBox="0 0 18 18"><rect x="1" y="1" width="15" height="9" fill="#fff" stroke="#2f73c3" stroke-width="1.6"/><circle cx="8.5" cy="5.5" r="2" fill="#2f73c3"/><ellipse cx="12" cy="11" rx="4" ry="1.6" fill="#eac386"/><ellipse cx="12" cy="13.3" rx="4" ry="1.6" fill="#eac386"/><ellipse cx="9" cy="15.8" rx="4" ry="1.6" fill="#eac386"/></svg>
<div class="a" style="left:1244px;top:581px;width:0;height:0;border-left:3px solid transparent;border-right:3px solid transparent;border-top:3px solid #555"></div>
<div class="t" style="left:1258px;top:575px;font-size:15px;color:#444">%</div>
<div class="t" style="left:1279px;top:577px;font-size:10.5px;color:#444">000</div>
<svg class="a" style="left:1222px;top:597px" width="16" height="16" viewBox="0 0 16 16"><path d="M1 4H7M3.5 1.5L1 4L3.5 6.5" fill="none" stroke="#2f73c3" stroke-width="1.3"/><text x="8" y="7" font-size="7.5" font-family="Liberation Sans" fill="#444">0</text><text x="2" y="14.5" font-size="7.5" font-family="Liberation Sans" fill="#444">,00</text></svg>
<svg class="a" style="left:1244px;top:597px" width="16" height="16" viewBox="0 0 16 16"><text x="4" y="7" font-size="7.5" font-family="Liberation Sans" fill="#444">,00</text><path d="M1 11.5H7M4.5 9L7 11.5L4.5 14" fill="none" stroke="#2f73c3" stroke-width="1.3"/><text x="8" y="14.5" font-size="7.5" font-family="Liberation Sans" fill="#444">,0</text></svg>
<div class="t" style="left:1231px;top:623.5px;font-size:10.9px;color:#595959">Nombre</div>
<svg class="a" style="left:1291px;top:625px" width="8" height="8" viewBox="0 0 8 8"><path d="M.5 .5H3.5M.5 .5V3.5M7.5 7.5H4M7.5 7.5V4M2 2L6.8 6.8" fill="none" stroke="#777" stroke-width="1"/></svg>
<div class="a" style="left:1302px;top:549px;width:1px;height:84px;background:#d6d6d6"></div>
<svg class="a" style="left:1310px;top:551px" width="17" height="17" viewBox="0 0 17 17"><rect x=".5" y=".5" width="13" height="12" fill="#fff" stroke="#777"/><rect x="1" y="1" width="6" height="3" fill="#e24b3b"/><rect x="7" y="1" width="6" height="3" fill="#2f73c3"/><rect x="1" y="4.5" width="6" height="3" fill="#e24b3b"/><rect x="7.5" y="7.5" width="9" height="9" fill="#fff" stroke="#555"/><path d="M9.5 11H14.5M9.5 13H14.5M10 15L14 9" stroke="#444" stroke-width=".8"/></svg>
<div class="t" style="left:1329px;top:553.5px;font-size:12.2px;color:#333">Mise en forme conditionnelle</div>
<div class="a" style="left:1486px;top:558px;width:0;height:0;border-left:3px solid transparent;border-right:3px solid transparent;border-top:3px solid #555"></div>
<svg class="a" style="left:1310px;top:574px" width="17" height="17" viewBox="0 0 17 17"><rect x=".5" y=".5" width="15" height="12" fill="#fff" stroke="#777"/><path d="M.5 4H15.5M.5 7.5H15.5M5.5 .5V12.5M10.5 .5V12.5" stroke="#9ab9e0"/><path d="M15 5L8 13" stroke="#444" stroke-width="1.4"/><ellipse cx="6" cy="14.5" rx="3.5" ry="2" fill="#2f73c3"/></svg>
<div class="t" style="left:1329px;top:576.5px;font-size:12.2px;color:#333">Mettre sous forme de tableau</div>
<div class="a" style="left:1486px;top:581px;width:0;height:0;border-left:3px solid transparent;border-right:3px solid transparent;border-top:3px solid #555"></div>
<svg class="a" style="left:1310px;top:597px" width="17" height="17" viewBox="0 0 17 17"><rect x=".5" y=".5" width="15" height="12" fill="#fff" stroke="#777"/><rect x="2.5" y="2.5" width="11" height="8" fill="#c9dcf2"/><path d="M15 5L8 13" stroke="#444" stroke-width="1.4"/><ellipse cx="6" cy="14.5" rx="3.5" ry="2" fill="#2f73c3"/></svg>
<div class="t" style="left:1329px;top:599.5px;font-size:12.2px;color:#333">Styles de cellules</div>
<div class="a" style="left:1422px;top:604px;width:0;height:0;border-left:3px solid transparent;border-right:3px solid transparent;border-top:3px solid #555"></div>
<div class="t" style="left:1391px;top:623.5px;font-size:10.9px;color:#595959">Style</div>
<div class="a" style="left:1503px;top:549px;width:1px;height:84px;background:#d6d6d6"></div>
<svg class="a" style="left:1510px;top:551px" width="17" height="17" viewBox="0 0 17 17"><path d="M.5 .5H5.5V16.5H.5Z M.5 5.5H5.5M.5 11H5.5M5.5 5.5H16.5V9.5H5.5" fill="#fff" stroke="#666"/><path d="M13 7.5H3M5.5 5L3 7.5L5.5 10" fill="none" stroke="#2f73c3" stroke-width="1.3"/></svg>
<div class="t" style="left:1530px;top:553.5px;font-size:12.2px;color:#333">Insérer</div>
<div class="a" style="left:1574px;top:558px;width:0;height:0;border-left:3px solid transparent;border-right:3px solid transparent;border-top:3px solid #555"></div>
<svg class="a" style="left:1510px;top:574px" width="17" height="17" viewBox="0 0 17 17"><path d="M.5 .5H5.5V16.5H.5Z M.5 5.5H5.5M.5 11H5.5M5.5 5.5H10.5V9.5H5.5" fill="#fff" stroke="#666"/><path d="M11 3L16 8M16 3L11 8" stroke="#e24b3b" stroke-width="1.5"/></svg>
<div class="t" style="left:1530px;top:576.5px;font-size:12.2px;color:#333">Supprimer</div>
<div class="a" style="left:1594px;top:581px;width:0;height:0;border-left:3px solid transparent;border-right:3px solid transparent;border-top:3px solid #555"></div>
<svg class="a" style="left:1510px;top:596px" width="17" height="18" viewBox="0 0 17 18"><path d="M1.5 1.5H15.5M1.5 0V3M15.5 0V3" stroke="#2f73c3" stroke-width="1"/><rect x=".5" y="5.5" width="15" height="12" fill="#fff" stroke="#666"/><path d="M.5 9.5H15.5M.5 13.5H15.5M5.5 5.5V17.5M10.5 5.5V17.5" stroke="#666"/><rect x="5.5" y="9.5" width="5" height="4" fill="#2f73c3"/></svg>
<div class="t" style="left:1530px;top:599.5px;font-size:12.2px;color:#333">Format</div>
<div class="a" style="left:1571px;top:604px;width:0;height:0;border-left:3px solid transparent;border-right:3px solid transparent;border-top:3px solid #555"></div>
<div class="t" style="left:1536px;top:623.5px;font-size:10.9px;color:#595959">Cellules</div>
<div class="a" style="left:1609px;top:549px;width:1px;height:84px;background:#d6d6d6"></div>
<svg class="a" style="left:1616px;top:551px" width="17" height="17" viewBox="0 0 17 17"><path d="M15 3.5V1.5H1.5L8.5 8.5L1.5 15.5H15V13.5" fill="none" stroke="#444" stroke-width="1.8"/></svg>
<div class="a" style="left:1637px;top:558px;width:0;height:0;border-left:3px solid transparent;border-right:3px solid transparent;border-top:3px solid #555"></div>
<svg class="a" style="left:1652px;top:550px" width="18" height="18" viewBox="0 0 18 18"><text x="1" y="8" font-size="8" font-family="Liberation Sans" fill="#2f73c3">A</text><text x="1" y="17" font-size="8" font-family="Liberation Sans" fill="#7b4fbd">Z</text><path d="M9.5 6H17L14.5 9.5V13H12V9.5Z" fill="#555"/></svg>
<div class="a" style="left:1672px;top:558px;width:0;height:0;border-left:3px solid transparent;border-right:3px solid transparent;border-top:3px solid #555"></div>
<svg class="a" style="left:1616px;top:574px" width="16" height="17" viewBox="0 0 16 17"><rect x=".5" y=".5" width="14" height="15" fill="#fff" stroke="#555"/><rect x=".5" y=".5" width="14" height="3" fill="#555"/><path d="M7.5 5V13M4.5 10L7.5 13L10.5 10" fill="none" stroke="#2f73c3" stroke-width="1.6"/></svg>
<div class="a" style="left:1636px;top:581px;width:0;height:0;border-left:3px solid transparent;border-right:3px solid transparent;border-top:3px solid #555"></div>
<svg class="a" style="left:1652px;top:574px" width="16" height="16" viewBox="0 0 16 16"><circle cx="10" cy="6" r="4.3" fill="none" stroke="#2f73c3" stroke-width="1.8"/><path d="M7 9L1.5 14.5" stroke="#2f73c3" stroke-width="2.2"/></svg>
<div class="a" style="left:1672px;top:581px;width:0;height:0;border-left:3px solid transparent;border-right:3px solid transparent;border-top:3px solid #555"></div>
<svg class="a" style="left:1616px;top:597px" width="16" height="16" viewBox="0 0 16 16"><path d="M1.5 9.5L8 3L13 8L8 13H4Z" fill="#f0a0b0"/><path d="M8 3L11 0.5L15.5 5L13 8Z" fill="#e0607a"/><path d="M2 14.5H14" stroke="#666" stroke-width="1"/></svg>
<div class="a" style="left:1636px;top:604px;width:0;height:0;border-left:3px solid transparent;border-right:3px solid transparent;border-top:3px solid #555"></div>
<div class="t" style="left:1629px;top:623.5px;font-size:10.9px;color:#595959">Édition</div>
<div class="a" style="left:1686px;top:549px;width:1px;height:84px;background:#d6d6d6"></div>
<svg class="a" style="left:1716px;top:553px" width="30" height="32" viewBox="0 0 30 32"><path d="M1.5 1.5H14L20 7.5V21H1.5Z" fill="#fff" stroke="#2f73c3" stroke-width="1.4"/><path d="M14 1.5V7.5H20" fill="none" stroke="#2f73c3" stroke-width="1.2"/><path d="M6 15Q9 8 10 12Q11 16 15 14" fill="none" stroke="#2f73c3" stroke-width="1"/><path d="M16 26L23 18" stroke="#2f73c3" stroke-width="1.2"/><rect x="13" y="22" width="7" height="4.5" rx="2.2" fill="none" stroke="#2f73c3" stroke-width="1.4" transform="rotate(-45 16.5 24)"/><rect x="20" y="15" width="7" height="4.5" rx="2.2" fill="none" stroke="#2f73c3" stroke-width="1.4" transform="rotate(-45 23.5 17)"/></svg>
<div class="t" style="left:1714px;top:587px;font-size:12.2px;color:#333">Créer</div>
<div class="t" style="left:1710px;top:603px;font-size:12.2px;color:#333">un PDF</div>
<div class="t" style="left:1690px;top:623.5px;font-size:10.9px;color:#595959">Adobe Acrobat</div>
<div class="a" style="left:1769px;top:549px;width:1px;height:84px;background:#d6d6d6"></div>
<svg class="a" style="left:1804px;top:624px" width="11" height="8" viewBox="0 0 11 8"><path d="M1 6.5L5.5 2L10 6.5" fill="none" stroke="#555" stroke-width="1.3"/></svg>
<div class="a" style="left:747px;top:638px;width:1079px;height:46px;background:#e6e6e6"></div>
<div class="a" style="left:751px;top:648px;width:102px;height:26px;background:#fff;border:1px solid #c6c6c6"></div>
<div class="t" style="left:758px;top:654.5px;font-size:13px;color:#333">A1</div>
<div class="a" style="left:838px;top:658px;width:0;height:0;border-left:4px solid transparent;border-right:4px solid transparent;border-top:4px solid #666"></div>
<div class="a" style="left:867px;top:657px;width:2px;height:2px;background:#999"></div><div class="a" style="left:867px;top:661px;width:2px;height:2px;background:#999"></div><div class="a" style="left:867px;top:665px;width:2px;height:2px;background:#999"></div>
<div class="a" style="left:883px;top:648px;width:110px;height:26px;background:#fff;border:1px solid #c6c6c6"></div>
<svg class="a" style="left:896px;top:655px" width="12" height="12" viewBox="0 0 12 12"><path d="M1 1L11 11M11 1L1 11" stroke="#bdbdbd" stroke-width="1.4"/></svg>
<svg class="a" style="left:931px;top:655px" width="15" height="12" viewBox="0 0 15 12"><path d="M1 6.5L5 10.5L14 1.5" fill="none" stroke="#bdbdbd" stroke-width="1.8"/></svg>
<div class="t" style="left:967px;top:653px;font-size:14px;font-family:'Liberation Serif';color:#555;font-weight:bold"><i>f</i><span style="font-size:9px"><i>x</i></span></div>
<div class="a" style="left:996px;top:648px;width:823px;height:26px;background:#fff;border:1px solid #c6c6c6"></div>
<div class="t" style="left:1009px;top:654.5px;font-size:13px;color:#333">ID</div>
<svg class="a" style="left:1805px;top:657px" width="10" height="7" viewBox="0 0 10 7"><path d="M1 1.5L5 5.5L9 1.5" fill="none" stroke="#555" stroke-width="1.4"/></svg>
<div class="a" style="left:747px;top:684px;width:1056px;height:347px;background:#fff"></div>
<div class="a" style="left:747px;top:684px;width:1056px;height:20px;background:#e6e6e6;border-bottom:1px solid #ababab"></div>
<div class="a" style="left:747px;top:704px;width:27px;height:327px;background:#e6e6e6;border-right:1px solid #ababab"></div>
<div class="a" style="left:774px;top:684px;width:31px;height:20px;background:#d2d2d2;border-bottom:2px solid #217346"></div>
<div class="a" style="left:747px;top:704px;width:27px;height:21px;background:#d2d2d2;border-right:2px solid #217346"></div>
<svg class="a" style="left:758px;top:690px" width="13" height="13" viewBox="0 0 13 13"><path d="M13 0V13H0Z" fill="#b4b4b4"/></svg>
<div class="a" style="left:804.5px;top:704px;width:1px;height:327px;background:#d9d9d9"></div>
<div class="a" style="left:804.5px;top:684px;width:1px;height:20px;background:#c4c4c4"></div>
<div class="a" style="left:908.5px;top:704px;width:1px;height:327px;background:#d9d9d9"></div>
<div class="a" style="left:908.5px;top:684px;width:1px;height:20px;background:#c4c4c4"></div>
<div class="a" style="left:1057.5px;top:704px;width:1px;height:327px;background:#d9d9d9"></div>
<div class="a" style="left:1057.5px;top:684px;width:1px;height:20px;background:#c4c4c4"></div>
<div class="a" style="left:1371.5px;top:704px;width:1px;height:327px;background:#d9d9d9"></div>
<div class="a" style="left:1371.5px;top:684px;width:1px;height:20px;background:#c4c4c4"></div>
<div class="a" style="left:1425.5px;top:704px;width:1px;height:327px;background:#d9d9d9"></div>
<div class="a" style="left:1425.5px;top:684px;width:1px;height:20px;background:#c4c4c4"></div>
<div class="a" style="left:1463.5px;top:704px;width:1px;height:327px;background:#d9d9d9"></div>
<div class="a" style="left:1463.5px;top:684px;width:1px;height:20px;background:#c4c4c4"></div>
<div class="a" style="left:1505.5px;top:704px;width:1px;height:327px;background:#d9d9d9"></div>
<div class="a" style="left:1505.5px;top:684px;width:1px;height:20px;background:#c4c4c4"></div>
<div class="a" style="left:1579.5px;top:704px;width:1px;height:327px;background:#d9d9d9"></div>
<div class="a" style="left:1579.5px;top:684px;width:1px;height:20px;background:#c4c4c4"></div>
<div class="a" style="left:1674.5px;top:704px;width:1px;height:327px;background:#d9d9d9"></div>
<div class="a" style="left:1674.5px;top:684px;width:1px;height:20px;background:#c4c4c4"></div>
<div class="a" style="left:1769.5px;top:704px;width:1px;height:327px;background:#d9d9d9"></div>
<div class="a" style="left:1769.5px;top:684px;width:1px;height:20px;background:#c4c4c4"></div>
<div class="a" style="left:1801.5px;top:704px;width:1px;height:327px;background:#d9d9d9"></div>
<div class="a" style="left:1801.5px;top:684px;width:1px;height:20px;background:#c4c4c4"></div>
<div class="a" style="left:774px;top:726px;width:1029px;height:1px;background:#d9d9d9"></div>
<div class="a" style="left:747px;top:726px;width:27px;height:1px;background:#c4c4c4"></div>
<div class="a" style="left:774px;top:747px;width:1029px;height:1px;background:#d9d9d9"></div>
<div class="a" style="left:747px;top:747px;width:27px;height:1px;background:#c4c4c4"></div>
<div class="a" style="left:774px;top:768px;width:1029px;height:1px;background:#d9d9d9"></div>
<div class="a" style="left:747px;top:768px;width:27px;height:1px;background:#c4c4c4"></div>
<div class="a" style="left:774px;top:789px;width:1029px;height:1px;background:#d9d9d9"></div>
<div class="a" style="left:747px;top:789px;width:27px;height:1px;background:#c4c4c4"></div>
<div class="a" style="left:774px;top:810px;width:1029px;height:1px;background:#d9d9d9"></div>
<div class="a" style="left:747px;top:810px;width:27px;height:1px;background:#c4c4c4"></div>
<div class="a" style="left:774px;top:830px;width:1029px;height:1px;background:#d9d9d9"></div>
<div class="a" style="left:747px;top:830px;width:27px;height:1px;background:#c4c4c4"></div>
<div class="a" style="left:774px;top:851px;width:1029px;height:1px;background:#d9d9d9"></div>
<div class="a" style="left:747px;top:851px;width:27px;height:1px;background:#c4c4c4"></div>
<div class="a" style="left:774px;top:872px;width:1029px;height:1px;background:#d9d9d9"></div>
<div class="a" style="left:747px;top:872px;width:27px;height:1px;background:#c4c4c4"></div>
<div class="a" style="left:774px;top:893px;width:1029px;height:1px;background:#d9d9d9"></div>
<div class="a" style="left:747px;top:893px;width:27px;height:1px;background:#c4c4c4"></div>
<div class="a" style="left:774px;top:914px;width:1029px;height:1px;background:#d9d9d9"></div>
<div class="a" style="left:747px;top:914px;width:27px;height:1px;background:#c4c4c4"></div>
<div class="a" style="left:774px;top:935px;width:1029px;height:1px;background:#d9d9d9"></div>
<div class="a" style="left:747px;top:935px;width:27px;height:1px;background:#c4c4c4"></div>
<div class="a" style="left:774px;top:956px;width:1029px;height:1px;background:#d9d9d9"></div>
<div class="a" style="left:747px;top:956px;width:27px;height:1px;background:#c4c4c4"></div>
<div class="a" style="left:774px;top:977px;width:1029px;height:1px;background:#d9d9d9"></div>
<div class="a" style="left:747px;top:977px;width:27px;height:1px;background:#c4c4c4"></div>
<div class="a" style="left:774px;top:998px;width:1029px;height:1px;background:#d9d9d9"></div>
<div class="a" style="left:747px;top:998px;width:27px;height:1px;background:#c4c4c4"></div>
<div class="a" style="left:774px;top:1019px;width:1029px;height:1px;background:#d9d9d9"></div>
<div class="a" style="left:747px;top:1019px;width:27px;height:1px;background:#c4c4c4"></div>
<div class="a" style="left:774px;top:1040px;width:1029px;height:1px;background:#d9d9d9"></div>
<div class="a" style="left:747px;top:1040px;width:27px;height:1px;background:#c4c4c4"></div>
<div class="t" style="left:774.5px;top:687px;width:30px;text-align:center;font-size:14px;color:#217346">A</div>
<div class="t" style="left:842.0px;top:687px;width:30px;text-align:center;font-size:14px;color:#333">B</div>
<div class="t" style="left:968.5px;top:687px;width:30px;text-align:center;font-size:14px;color:#333">C</div>
<div class="t" style="left:1200.0px;top:687px;width:30px;text-align:center;font-size:14px;color:#333">D</div>
<div class="t" style="left:1384.0px;top:687px;width:30px;text-align:center;font-size:14px;color:#333">E</div>
<div class="t" style="left:1430.0px;top:687px;width:30px;text-align:center;font-size:14px;color:#333">F</div>
<div class="t" style="left:1470.0px;top:687px;width:30px;text-align:center;font-size:14px;color:#333">G</div>
<div class="t" style="left:1528.0px;top:687px;width:30px;text-align:center;font-size:14px;color:#333">H</div>
<div class="t" style="left:1612.5px;top:687px;width:30px;text-align:center;font-size:14px;color:#333">I</div>
<div class="t" style="left:1707.5px;top:687px;width:30px;text-align:center;font-size:14px;color:#333">J</div>
<div class="t" style="left:1781.5px;top:687px;width:30px;text-align:center;font-size:14px;color:#333">K</div>
<div class="t" style="left:747px;top:709.5px;width:27px;text-align:center;font-size:14.5px;color:#217346">1</div>
<div class="t" style="left:747px;top:730.5px;width:27px;text-align:center;font-size:14.5px;color:#333">2</div>
<div class="t" style="left:747px;top:751.5px;width:27px;text-align:center;font-size:14.5px;color:#333">3</div>
<div class="t" style="left:747px;top:772.5px;width:27px;text-align:center;font-size:14.5px;color:#333">4</div>
<div class="t" style="left:747px;top:793.5px;width:27px;text-align:center;font-size:14.5px;color:#333">5</div>
<div class="t" style="left:747px;top:814.5px;width:27px;text-align:center;font-size:14.5px;color:#333">6</div>
<div class="t" style="left:747px;top:834.5px;width:27px;text-align:center;font-size:14.5px;color:#333">7</div>
<div class="t" style="left:747px;top:855.5px;width:27px;text-align:center;font-size:14.5px;color:#333">8</div>
<div class="t" style="left:747px;top:876.5px;width:27px;text-align:center;font-size:14.5px;color:#333">9</div>
<div class="t" style="left:747px;top:897.5px;width:27px;text-align:center;font-size:14.5px;color:#333">10</div>
<div class="t" style="left:747px;top:918.5px;width:27px;text-align:center;font-size:14.5px;color:#333">11</div>
<div class="t" style="left:747px;top:939.5px;width:27px;text-align:center;font-size:14.5px;color:#333">12</div>
<div class="t" style="left:747px;top:960.5px;width:27px;text-align:center;font-size:14.5px;color:#333">13</div>
<div class="t" style="left:747px;top:981.5px;width:27px;text-align:center;font-size:14.5px;color:#333">14</div>
<div class="t" style="left:747px;top:1002.5px;width:27px;text-align:center;font-size:14.5px;color:#333">15</div>
<div class="t" style="left:747px;top:1023.5px;width:27px;text-align:center;font-size:14.5px;color:#333">16</div>
<div class="t" style="left:777px;top:709.5px;font-size:14.5px;color:#000">ID</div>
<div class="t" style="left:808px;top:709.5px;font-size:14.5px;color:#000">Code</div>
<div class="t" style="left:912px;top:709.5px;font-size:14.5px;color:#000">Désignation</div>
<div class="t" style="left:1061px;top:709.5px;font-size:14.5px;color:#000">Description</div>
<div class="t" style="left:1375px;top:709.5px;font-size:14.5px;color:#000">Famille</div>
<div class="t" style="left:1429px;top:709.5px;font-size:14.5px;color:#000">Type</div>
<div class="t" style="left:1467px;top:709.5px;font-size:14.5px;color:#000">Unité</div>
<div class="t" style="left:1509px;top:709.5px;font-size:14.5px;color:#000">Statut</div>
<div class="t" style="left:1583px;top:709.5px;font-size:14.5px;color:#000">Gestion stock</div>
<div class="t" style="left:1678px;top:709.5px;font-size:14.5px;color:#000">Date création</div>
<div class="t" style="left:1773px;top:709.5px;font-size:14.5px;color:#000">Actio</div>
<div class="t" style="left:702px;top:730.5px;font-size:14.5px;color:#000;width:100px;text-align:right">1</div>
<div class="t" style="left:808px;top:730.5px;font-size:14.5px;color:#000">ART-0001</div>
<div class="t" style="left:912px;top:730.5px;font-size:14.5px;color:#000">Roulement acier</div>
<div class="t" style="left:1061px;top:730.5px;font-size:14.5px;color:#000">Composant industriel de haute qualité</div>
<div class="t" style="left:1323px;top:730.5px;font-size:14.5px;color:#000;width:100px;text-align:right">3</div>
<div class="t" style="left:1361px;top:730.5px;font-size:14.5px;color:#000;width:100px;text-align:right">3</div>
<div class="t" style="left:1403px;top:730.5px;font-size:14.5px;color:#000;width:100px;text-align:right">1</div>
<div class="t" style="left:1509px;top:730.5px;font-size:14.5px;color:#000">Actif</div>
<div class="t" style="left:1583px;top:730.5px;font-size:14.5px;color:#000">Oui</div>
<div class="t" style="left:1667px;top:730.5px;font-size:14.5px;color:#000;width:100px;text-align:right">31/01/2024</div>
<div class="a" style="left:1774px;top:735px;width:11px;height:4px;background:#000;border-radius:1px"></div>
<div class="a" style="left:1786px;top:736px;width:2px;height:2px;background:#333"></div>
<div class="t" style="left:702px;top:751.5px;font-size:14.5px;color:#000;width:100px;text-align:right">2</div>
<div class="t" style="left:808px;top:751.5px;font-size:14.5px;color:#000">ART-0002</div>
<div class="t" style="left:912px;top:751.5px;font-size:14.5px;color:#000">Vis métrique</div>
<div class="t" style="left:1061px;top:751.5px;font-size:14.5px;color:#000">Élément mécanique pour assemblage machine</div>
<div class="t" style="left:1323px;top:751.5px;font-size:14.5px;color:#000;width:100px;text-align:right">3</div>
<div class="t" style="left:1361px;top:751.5px;font-size:14.5px;color:#000;width:100px;text-align:right">3</div>
<div class="t" style="left:1403px;top:751.5px;font-size:14.5px;color:#000;width:100px;text-align:right">1</div>
<div class="t" style="left:1509px;top:751.5px;font-size:14.5px;color:#000">Actif</div>
<div class="t" style="left:1583px;top:751.5px;font-size:14.5px;color:#000">Oui</div>
<div class="t" style="left:1667px;top:751.5px;font-size:14.5px;color:#000;width:100px;text-align:right">29/02/2024</div>
<div class="a" style="left:1774px;top:756px;width:11px;height:4px;background:#000;border-radius:1px"></div>
<div class="a" style="left:1786px;top:757px;width:2px;height:2px;background:#333"></div>
<div class="t" style="left:702px;top:772.5px;font-size:14.5px;color:#000;width:100px;text-align:right">3</div>
<div class="t" style="left:808px;top:772.5px;font-size:14.5px;color:#000">ART-0003</div>
<div class="t" style="left:912px;top:772.5px;font-size:14.5px;color:#000">Tôle acier</div>
<div class="t" style="left:1061px;top:772.5px;font-size:14.5px;color:#000">Pièce essentielle pour ligne de production</div>
<div class="t" style="left:1323px;top:772.5px;font-size:14.5px;color:#000;width:100px;text-align:right">3</div>
<div class="t" style="left:1361px;top:772.5px;font-size:14.5px;color:#000;width:100px;text-align:right">3</div>
<div class="t" style="left:1403px;top:772.5px;font-size:14.5px;color:#000;width:100px;text-align:right">2</div>
<div class="t" style="left:1509px;top:772.5px;font-size:14.5px;color:#000">Suspendu</div>
<div class="t" style="left:1583px;top:772.5px;font-size:14.5px;color:#000">Oui</div>
<div class="t" style="left:1667px;top:772.5px;font-size:14.5px;color:#000;width:100px;text-align:right">31/03/2024</div>
<div class="a" style="left:1774px;top:777px;width:11px;height:4px;background:#000;border-radius:1px"></div>
<div class="a" style="left:1786px;top:778px;width:2px;height:2px;background:#333"></div>
<div class="t" style="left:702px;top:793.5px;font-size:14.5px;color:#000;width:100px;text-align:right">4</div>
<div class="t" style="left:808px;top:793.5px;font-size:14.5px;color:#000">ART-0004</div>
<div class="t" style="left:912px;top:793.5px;font-size:14.5px;color:#000">Pompe hydraulique</div>
<div class="t" style="left:1061px;top:793.5px;font-size:14.5px;color:#000">Produit utilisé dans systèmes automatisés</div>
<div class="t" style="left:1323px;top:793.5px;font-size:14.5px;color:#000;width:100px;text-align:right">1</div>
<div class="t" style="left:1361px;top:793.5px;font-size:14.5px;color:#000;width:100px;text-align:right">1</div>
<div class="t" style="left:1403px;top:793.5px;font-size:14.5px;color:#000;width:100px;text-align:right">1</div>
<div class="t" style="left:1509px;top:793.5px;font-size:14.5px;color:#000">Archivé</div>
<div class="t" style="left:1583px;top:793.5px;font-size:14.5px;color:#000">Oui</div>
<div class="t" style="left:1667px;top:793.5px;font-size:14.5px;color:#000;width:100px;text-align:right">30/04/2024</div>
<div class="a" style="left:1774px;top:798px;width:11px;height:4px;background:#000;border-radius:1px"></div>
<div class="a" style="left:1786px;top:799px;width:2px;height:2px;background:#333"></div>
<div class="t" style="left:702px;top:814.5px;font-size:14.5px;color:#000;width:100px;text-align:right">5</div>
<div class="t" style="left:808px;top:814.5px;font-size:14.5px;color:#000">ART-0005</div>
<div class="t" style="left:912px;top:814.5px;font-size:14.5px;color:#000">Joint torique</div>
<div class="t" style="left:1061px;top:814.5px;font-size:14.5px;color:#000">Composant certifié ISO pour industrie</div>
<div class="t" style="left:1323px;top:814.5px;font-size:14.5px;color:#000;width:100px;text-align:right">3</div>
<div class="t" style="left:1361px;top:814.5px;font-size:14.5px;color:#000;width:100px;text-align:right">3</div>
<div class="t" style="left:1403px;top:814.5px;font-size:14.5px;color:#000;width:100px;text-align:right">1</div>
<div class="t" style="left:1509px;top:814.5px;font-size:14.5px;color:#000">En attente</div>
<div class="t" style="left:1583px;top:814.5px;font-size:14.5px;color:#000">Oui</div>
<div class="t" style="left:1667px;top:814.5px;font-size:14.5px;color:#000;width:100px;text-align:right">31/05/2024</div>
<div class="a" style="left:1774px;top:819px;width:11px;height:4px;background:#000;border-radius:1px"></div>
<div class="a" style="left:1786px;top:820px;width:2px;height:2px;background:#333"></div>
<div class="t" style="left:702px;top:834.5px;font-size:14.5px;color:#000;width:100px;text-align:right">6</div>
<div class="t" style="left:808px;top:834.5px;font-size:14.5px;color:#000">ART-0006</div>
<div class="t" style="left:912px;top:834.5px;font-size:14.5px;color:#000">Moteur triphasé</div>
<div class="t" style="left:1061px;top:834.5px;font-size:14.5px;color:#000">Composant industriel de haute qualité</div>
<div class="t" style="left:1323px;top:834.5px;font-size:14.5px;color:#000;width:100px;text-align:right">1</div>
<div class="t" style="left:1361px;top:834.5px;font-size:14.5px;color:#000;width:100px;text-align:right">1</div>
<div class="t" style="left:1403px;top:834.5px;font-size:14.5px;color:#000;width:100px;text-align:right">1</div>
<div class="t" style="left:1509px;top:834.5px;font-size:14.5px;color:#000">Actif</div>
<div class="t" style="left:1583px;top:834.5px;font-size:14.5px;color:#000">Oui</div>
<div class="t" style="left:1667px;top:834.5px;font-size:14.5px;color:#000;width:100px;text-align:right">30/06/2024</div>
<div class="a" style="left:1774px;top:839px;width:11px;height:4px;background:#000;border-radius:1px"></div>
<div class="a" style="left:1786px;top:840px;width:2px;height:2px;background:#333"></div>
<div class="t" style="left:702px;top:855.5px;font-size:14.5px;color:#000;width:100px;text-align:right">7</div>
<div class="t" style="left:808px;top:855.5px;font-size:14.5px;color:#000">ART-0007</div>
<div class="t" style="left:912px;top:855.5px;font-size:14.5px;color:#000">Arbre mécanique</div>
<div class="t" style="left:1061px;top:855.5px;font-size:14.5px;color:#000">Pièce essentielle pour ligne de production</div>
<div class="t" style="left:1323px;top:855.5px;font-size:14.5px;color:#000;width:100px;text-align:right">2</div>
<div class="t" style="left:1361px;top:855.5px;font-size:14.5px;color:#000;width:100px;text-align:right">2</div>
<div class="t" style="left:1403px;top:855.5px;font-size:14.5px;color:#000;width:100px;text-align:right">1</div>
<div class="t" style="left:1509px;top:855.5px;font-size:14.5px;color:#000">Actif</div>
<div class="t" style="left:1583px;top:855.5px;font-size:14.5px;color:#000">Oui</div>
<div class="t" style="left:1667px;top:855.5px;font-size:14.5px;color:#000;width:100px;text-align:right">31/08/2024</div>
<div class="a" style="left:1774px;top:860px;width:11px;height:4px;background:#000;border-radius:1px"></div>
<div class="a" style="left:1786px;top:861px;width:2px;height:2px;background:#333"></div>
<div class="t" style="left:702px;top:876.5px;font-size:14.5px;color:#000;width:100px;text-align:right">8</div>
<div class="t" style="left:808px;top:876.5px;font-size:14.5px;color:#000">ART-0008</div>
<div class="t" style="left:912px;top:876.5px;font-size:14.5px;color:#000">Huile hydraulique</div>
<div class="t" style="left:1061px;top:876.5px;font-size:14.5px;color:#000">Produit utilisé dans systèmes automatisés</div>
<div class="t" style="left:1323px;top:876.5px;font-size:14.5px;color:#000;width:100px;text-align:right">3</div>
<div class="t" style="left:1361px;top:876.5px;font-size:14.5px;color:#000;width:100px;text-align:right">3</div>
<div class="t" style="left:1403px;top:876.5px;font-size:14.5px;color:#000;width:100px;text-align:right">3</div>
<div class="t" style="left:1509px;top:876.5px;font-size:14.5px;color:#000">Actif</div>
<div class="t" style="left:1583px;top:876.5px;font-size:14.5px;color:#000">Oui</div>
<div class="t" style="left:1667px;top:876.5px;font-size:14.5px;color:#000;width:100px;text-align:right">30/09/2024</div>
<div class="a" style="left:1774px;top:881px;width:11px;height:4px;background:#000;border-radius:1px"></div>
<div class="a" style="left:1786px;top:882px;width:2px;height:2px;background:#333"></div>
<div class="t" style="left:702px;top:897.5px;font-size:14.5px;color:#000;width:100px;text-align:right">9</div>
<div class="t" style="left:808px;top:897.5px;font-size:14.5px;color:#000">ART-0009</div>
<div class="t" style="left:912px;top:897.5px;font-size:14.5px;color:#000">Capteur inductif</div>
<div class="t" style="left:1061px;top:897.5px;font-size:14.5px;color:#000">Élément mécanique pour assemblage machine</div>
<div class="t" style="left:1323px;top:897.5px;font-size:14.5px;color:#000;width:100px;text-align:right">2</div>
<div class="t" style="left:1361px;top:897.5px;font-size:14.5px;color:#000;width:100px;text-align:right">2</div>
<div class="t" style="left:1403px;top:897.5px;font-size:14.5px;color:#000;width:100px;text-align:right">1</div>
<div class="t" style="left:1509px;top:897.5px;font-size:14.5px;color:#000">Actif</div>
<div class="t" style="left:1583px;top:897.5px;font-size:14.5px;color:#000">Oui</div>
<div class="t" style="left:1667px;top:897.5px;font-size:14.5px;color:#000;width:100px;text-align:right">30/11/2024</div>
<div class="a" style="left:1774px;top:902px;width:11px;height:4px;background:#000;border-radius:1px"></div>
<div class="a" style="left:1786px;top:903px;width:2px;height:2px;background:#333"></div>
<div class="t" style="left:702px;top:918.5px;font-size:14.5px;color:#000;width:100px;text-align:right">10</div>
<div class="t" style="left:808px;top:918.5px;font-size:14.5px;color:#000">ART-0010</div>
<div class="t" style="left:912px;top:918.5px;font-size:14.5px;color:#000">Pignon mécanique</div>
<div class="t" style="left:1061px;top:918.5px;font-size:14.5px;color:#000">Pièce essentielle pour ligne de production</div>
<div class="t" style="left:1323px;top:918.5px;font-size:14.5px;color:#000;width:100px;text-align:right">2</div>
<div class="t" style="left:1361px;top:918.5px;font-size:14.5px;color:#000;width:100px;text-align:right">2</div>
<div class="t" style="left:1403px;top:918.5px;font-size:14.5px;color:#000;width:100px;text-align:right">1</div>
<div class="t" style="left:1509px;top:918.5px;font-size:14.5px;color:#000">Actif</div>
<div class="t" style="left:1583px;top:918.5px;font-size:14.5px;color:#000">Oui</div>
<div class="t" style="left:1678px;top:918.5px;font-size:14.5px;color:#000">13/01/2024</div>
<div class="a" style="left:1774px;top:923px;width:11px;height:4px;background:#000;border-radius:1px"></div>
<div class="a" style="left:1786px;top:924px;width:2px;height:2px;background:#333"></div>
<div class="t" style="left:702px;top:939.5px;font-size:14.5px;color:#000;width:100px;text-align:right">11</div>
<div class="t" style="left:808px;top:939.5px;font-size:14.5px;color:#000">ART-0011</div>
<div class="t" style="left:912px;top:939.5px;font-size:14.5px;color:#000">Raccord pneumatique</div>
<div class="t" style="left:1061px;top:939.5px;font-size:14.5px;color:#000">Produit utilisé dans systèmes automatisés</div>
<div class="t" style="left:1323px;top:939.5px;font-size:14.5px;color:#000;width:100px;text-align:right">3</div>
<div class="t" style="left:1361px;top:939.5px;font-size:14.5px;color:#000;width:100px;text-align:right">3</div>
<div class="t" style="left:1403px;top:939.5px;font-size:14.5px;color:#000;width:100px;text-align:right">1</div>
<div class="t" style="left:1509px;top:939.5px;font-size:14.5px;color:#000">Actif</div>
<div class="t" style="left:1583px;top:939.5px;font-size:14.5px;color:#000">Oui</div>
<div class="t" style="left:1678px;top:939.5px;font-size:14.5px;color:#000">14/01/2024</div>
<div class="a" style="left:1774px;top:944px;width:11px;height:4px;background:#000;border-radius:1px"></div>
<div class="a" style="left:1786px;top:945px;width:2px;height:2px;background:#333"></div>
<div class="t" style="left:702px;top:960.5px;font-size:14.5px;color:#000;width:100px;text-align:right">12</div>
<div class="t" style="left:808px;top:960.5px;font-size:14.5px;color:#000">ART-0012</div>
<div class="t" style="left:912px;top:960.5px;font-size:14.5px;color:#000">Boîtier ABS</div>
<div class="t" style="left:1061px;top:960.5px;font-size:14.5px;color:#000">Composant certifié ISO pour industrie</div>
<div class="t" style="left:1323px;top:960.5px;font-size:14.5px;color:#000;width:100px;text-align:right">1</div>
<div class="t" style="left:1361px;top:960.5px;font-size:14.5px;color:#000;width:100px;text-align:right">1</div>
<div class="t" style="left:1403px;top:960.5px;font-size:14.5px;color:#000;width:100px;text-align:right">1</div>
<div class="t" style="left:1509px;top:960.5px;font-size:14.5px;color:#000">Actif</div>
<div class="t" style="left:1583px;top:960.5px;font-size:14.5px;color:#000">Oui</div>
<div class="t" style="left:1678px;top:960.5px;font-size:14.5px;color:#000">15/01/2024</div>
<div class="a" style="left:1774px;top:965px;width:11px;height:4px;background:#000;border-radius:1px"></div>
<div class="a" style="left:1786px;top:966px;width:2px;height:2px;background:#333"></div>
<div class="t" style="left:702px;top:981.5px;font-size:14.5px;color:#000;width:100px;text-align:right">13</div>
<div class="t" style="left:808px;top:981.5px;font-size:14.5px;color:#000">ART-0013</div>
<div class="t" style="left:912px;top:981.5px;font-size:14.5px;color:#000">Courroie trapézoïdale</div>
<div class="t" style="left:1061px;top:981.5px;font-size:14.5px;color:#000">Composant industriel de haute qualité</div>
<div class="t" style="left:1323px;top:981.5px;font-size:14.5px;color:#000;width:100px;text-align:right">2</div>
<div class="t" style="left:1361px;top:981.5px;font-size:14.5px;color:#000;width:100px;text-align:right">2</div>
<div class="t" style="left:1403px;top:981.5px;font-size:14.5px;color:#000;width:100px;text-align:right">1</div>
<div class="t" style="left:1509px;top:981.5px;font-size:14.5px;color:#000">Actif</div>
<div class="t" style="left:1583px;top:981.5px;font-size:14.5px;color:#000">Oui</div>
<div class="t" style="left:1678px;top:981.5px;font-size:14.5px;color:#000">17/01/2024</div>
<div class="a" style="left:1774px;top:986px;width:11px;height:4px;background:#000;border-radius:1px"></div>
<div class="a" style="left:1786px;top:987px;width:2px;height:2px;background:#333"></div>
<div class="t" style="left:702px;top:1002.5px;font-size:14.5px;color:#000;width:100px;text-align:right">14</div>
<div class="t" style="left:808px;top:1002.5px;font-size:14.5px;color:#000">ART-0014</div>
<div class="t" style="left:912px;top:1002.5px;font-size:14.5px;color:#000">Écrou hexagonal</div>
<div class="t" style="left:1061px;top:1002.5px;font-size:14.5px;color:#000">Élément mécanique pour assemblage machine</div>
<div class="t" style="left:1323px;top:1002.5px;font-size:14.5px;color:#000;width:100px;text-align:right">3</div>
<div class="t" style="left:1361px;top:1002.5px;font-size:14.5px;color:#000;width:100px;text-align:right">3</div>
<div class="t" style="left:1403px;top:1002.5px;font-size:14.5px;color:#000;width:100px;text-align:right">1</div>
<div class="t" style="left:1509px;top:1002.5px;font-size:14.5px;color:#000">Actif</div>
<div class="t" style="left:1583px;top:1002.5px;font-size:14.5px;color:#000">Oui</div>
<div class="t" style="left:1678px;top:1002.5px;font-size:14.5px;color:#000">18/01/2024</div>
<div class="a" style="left:1774px;top:1007px;width:11px;height:4px;background:#000;border-radius:1px"></div>
<div class="a" style="left:1786px;top:1008px;width:2px;height:2px;background:#333"></div>
<div class="t" style="left:702px;top:1023.5px;font-size:14.5px;color:#000;width:100px;text-align:right">15</div>
<div class="t" style="left:808px;top:1023.5px;font-size:14.5px;color:#000">ART-0015</div>
<div class="t" style="left:912px;top:1023.5px;font-size:14.5px;color:#000">Châssis industriel</div>
<div class="t" style="left:1061px;top:1023.5px;font-size:14.5px;color:#000">Pièce essentielle pour ligne de production</div>
<div class="t" style="left:1323px;top:1023.5px;font-size:14.5px;color:#000;width:100px;text-align:right">1</div>
<div class="t" style="left:1361px;top:1023.5px;font-size:14.5px;color:#000;width:100px;text-align:right">1</div>
<div class="t" style="left:1403px;top:1023.5px;font-size:14.5px;color:#000;width:100px;text-align:right">1</div>
<div class="t" style="left:1509px;top:1023.5px;font-size:14.5px;color:#000">Actif</div>
<div class="t" style="left:1583px;top:1023.5px;font-size:14.5px;color:#000">Oui</div>
<div class="t" style="left:1678px;top:1023.5px;font-size:14.5px;color:#000">19/01/2024</div>
<div class="a" style="left:1774px;top:1028px;width:11px;height:4px;background:#000;border-radius:1px"></div>
<div class="a" style="left:1786px;top:1029px;width:2px;height:2px;background:#333"></div>
<div class="a" style="left:774px;top:703px;width:32px;height:23px;border:2px solid #217346"></div>
<div class="a" style="left:803px;top:723px;width:5px;height:5px;background:#217346;border:1px solid #fff"></div>
<div class="a" style="left:1803px;top:684px;width:20px;height:347px;background:#dcdcdc"></div>
<div class="a" style="left:1802px;top:704px;width:1px;height:327px;background:#a0a0a0"></div>
<div class="a" style="left:1806px;top:686px;width:15px;height:15px;background:#fff;border:1px solid #ababab"></div>
<div class="a" style="left:1809.5px;top:691px;width:0;height:0;border-left:4px solid transparent;border-right:4px solid transparent;border-bottom:4px solid #666"></div>
<div class="a" style="left:1806px;top:702px;width:15px;height:64px;background:#fff;border:1px solid #ababab"></div>
<div class="a" style="left:1824px;top:484px;width:1.5px;height:547px;background:#217346"></div></div>
<div class="a" style="left:745px;top:482px;width:83px;height:0px;"></div>
<div class="a" style="left:745px;top:482px;width:83px;height:549px"></div>
<div class="a" style="left:745px;top:482px;width:1084px;height:549px;border:2.5px solid #f00;border-radius:5px;box-shadow:1px 1px 6px rgba(0,0,0,.15)"></div>
<!--OVERLAY-->
</body></html>
